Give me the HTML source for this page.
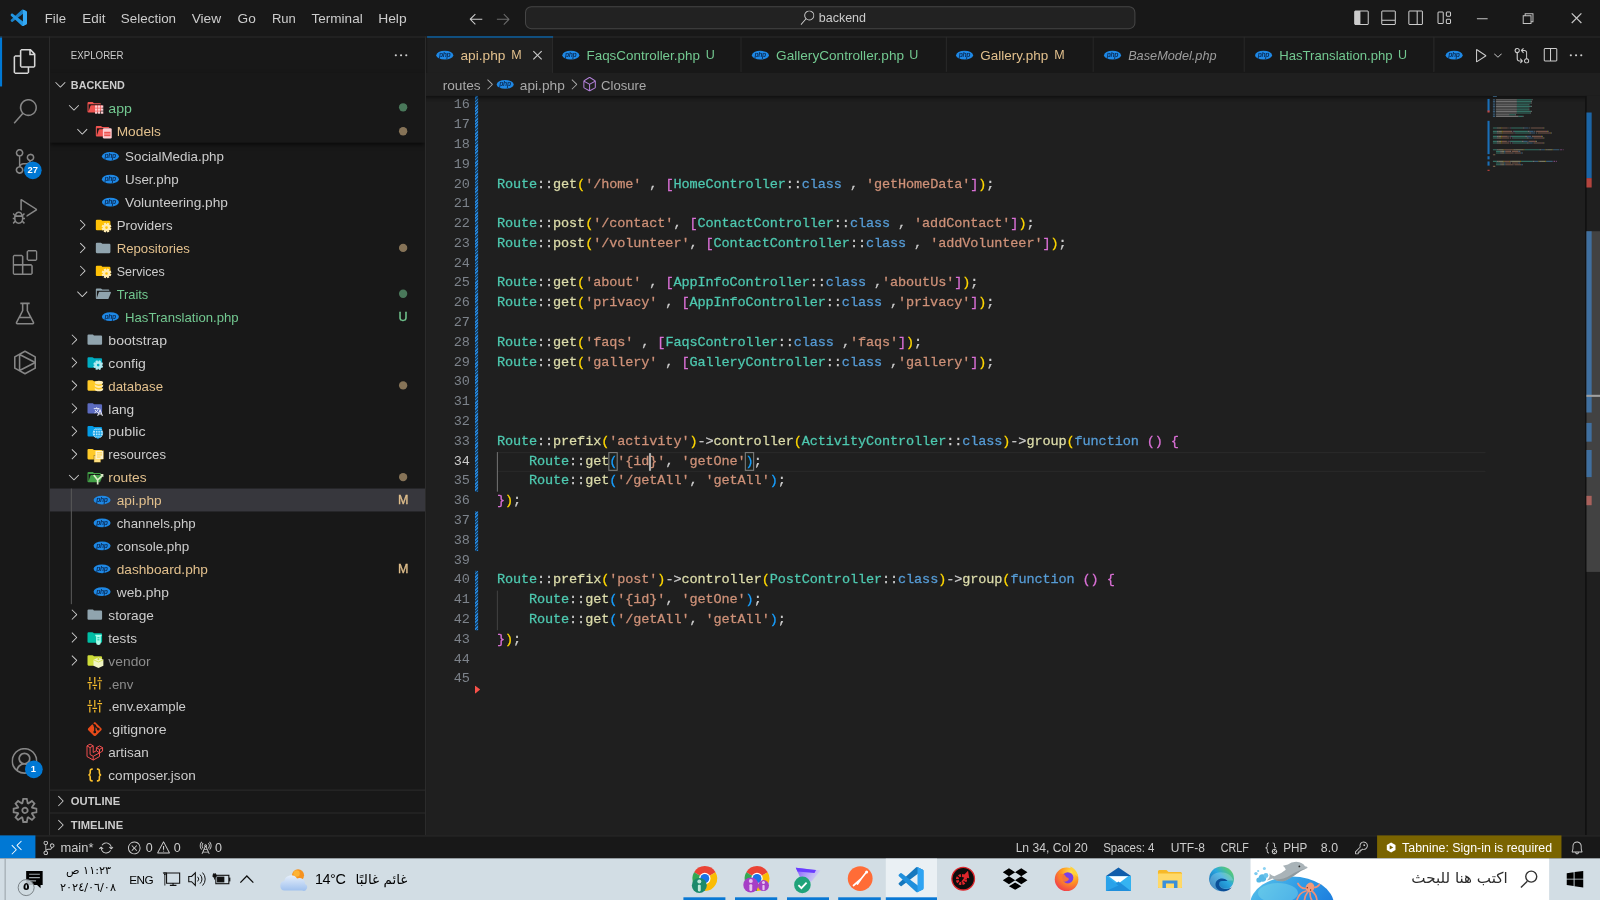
<!DOCTYPE html>
<html lang="en"><head><meta charset="utf-8"><title>api.php - backend - Visual Studio Code</title>
<style>

html,body{margin:0;padding:0;background:#181818;width:1600px;height:900px;overflow:hidden}
#root{position:absolute;left:0;top:0;width:1536px;height:864px;transform:scale(1.0416667);transform-origin:0 0;
 font-family:"Liberation Sans",sans-serif;font-size:13px;color:#cccccc;letter-spacing:-0.15px;background:#181818;overflow:hidden;will-change:transform}
#root *{box-sizing:border-box}
.abs{position:absolute}
svg.ci{display:block;position:absolute}
.t{position:absolute;white-space:pre;line-height:1}
/* title */
#title{position:absolute;left:0;top:0;width:1536px;height:35px;background:#181818}
#title .m{position:absolute;top:10px;white-space:pre;color:#cccccc;line-height:15px}
#cc{position:absolute;left:504px;top:6px;width:586px;height:22px;border:1px solid #454545;border-radius:6px;background:#222222}
/* activity */
#act{position:absolute;left:0;top:35px;width:48px;height:767px;background:#181818;border-right:1px solid #2b2b2b}
/* side */
#side{position:absolute;left:48px;top:35px;width:361px;height:767px;background:#181818;border-right:1px solid #2b2b2b;overflow:hidden}
.row{position:absolute;left:0;width:360px;height:22px}
.row .lbl{position:absolute;top:4px;line-height:15px;white-space:pre}
.row .dec{position:absolute;top:4px;line-height:15px;left:331px;width:16px;text-align:center;font-size:12px;letter-spacing:0;-webkit-text-stroke:0.3px}
.row .dot{position:absolute;top:7px;left:335px;width:8px;height:8px;border-radius:50%}
.mod{color:#e2c08d}.unt{color:#73c991}.ign{color:#8c8c8c}
/* editor */
#ed{position:absolute;left:409px;top:35px;width:1127px;height:767px;background:#1f1f1f;overflow:hidden}
#tabs{position:absolute;left:0;top:0;width:1127px;height:35px;background:#181818}
.tab{position:absolute;top:0;height:35px;border-right:1px solid #2b2b2b;background:#181818}
.ign2{color:#9d9d9d}.tab .lbl{position:absolute;top:10px;line-height:15px;white-space:pre}
#bc{position:absolute;left:0;top:35px;width:1127px;height:22px;background:#1f1f1f}
#code{position:absolute;left:0;top:57px;width:1127px;height:710px;overflow:hidden;background:#1f1f1f}
.ln{position:absolute;left:0;width:42px;text-align:right;font-family:"Liberation Mono",monospace;font-size:13px;letter-spacing:-0.1px;color:#7d838b;line-height:19px;height:19px}
.cl{position:absolute;left:68px;font-family:"Liberation Mono",monospace;font-size:13px;letter-spacing:-0.1px;color:#cccccc;line-height:19px;height:19px;white-space:pre;-webkit-text-stroke:0.25px}
.k{color:#569cd6}.c{color:#4ec9b0}.f{color:#dcdcaa}.s{color:#ce9178}.b1{color:#ffd700}.b2{color:#da70d6}.b3{color:#179fff}
/* status */
#status{position:absolute;left:0;top:802px;width:1536px;height:22px;background:#181818;border-top:1px solid #2b2b2b;font-size:12px;letter-spacing:-0.05px}
#status .t{top:4px;line-height:14px;color:#cccccc}
/* taskbar */
#task{position:absolute;left:0;top:824px;width:1536px;height:40px;background:#d2dde4;color:#000;overflow:hidden}
.ar{font-family:"DejaVu Sans","Liberation Sans",sans-serif;direction:rtl;letter-spacing:0}

</style></head>
<body>
<div id="root">
<div id="title"><svg class="abs" style="left:9.5px;top:9px" width="16" height="16" viewBox="0 0 100 100"><path fill="#1b7fc4" d="M96.5 10.8 75.9 0.9a6.2 6.2 0 0 0-7.1 1.2L1.3 63.6a4.2 4.2 0 0 0 0 6.2l5.5 5a4.2 4.2 0 0 0 5.3 0.2L93.3 13.4c2.7-2.1 6.7-0.100 6.7 3.300v-0.2a6.300 6.300 0 0 0-3.500-5.700z"/><path fill="#2196e3" d="M96.5 89.2 75.900 99.100a6.200 6.200 0 0 1-7.100-1.200L1.300 36.400a4.200 4.200 0 0 1 0-6.200l5.500-5a4.200 4.200 0 0 1 5.300-0.200L93.300 86.600c2.700 2.100 6.700 0.100 6.700-3.300v0.200a6.300 6.300 0 0 1-3.500 5.700z"/><path fill="#35a9f5" d="M75.900 99.100a6.200 6.200 0 0 1-7.100-1.200c2.300 2.300 6.200 0.700 6.200-2.600V4.700c0-3.300-3.900-4.900-6.200-2.600a6.200 6.200 0 0 1 7.100-1.200l20.600 9.900A6.300 6.300 0 0 1 100 16.500v67a6.300 6.300 0 0 1-3.500 5.700z"/></svg><span class="m" style="left:43.3px;display:inline-block;transform:scaleX(0.9736);transform-origin:0 50%;letter-spacing:0;">File</span><span class="m" style="left:78.5px;display:inline-block;transform:scaleX(0.9962);transform-origin:0 50%;letter-spacing:0;">Edit</span><span class="m" style="left:116.4px;display:inline-block;transform:scaleX(0.9917);transform-origin:0 50%;letter-spacing:0;">Selection</span><span class="m" style="left:184.3px;display:inline-block;transform:scaleX(1.0131);transform-origin:0 50%;letter-spacing:0;">View</span><span class="m" style="left:227.8px;display:inline-block;transform:scaleX(1.0102);transform-origin:0 50%;letter-spacing:0;">Go</span><span class="m" style="left:260.6px;display:inline-block;transform:scaleX(0.9657);transform-origin:0 50%;letter-spacing:0;">Run</span><span class="m" style="left:299px;display:inline-block;transform:scaleX(1.0015);transform-origin:0 50%;letter-spacing:0;">Terminal</span><span class="m" style="left:363.1px;display:inline-block;transform:scaleX(1.0228);transform-origin:0 50%;letter-spacing:0;">Help</span><svg class="ci " width="16" height="16" viewBox="0 0 16 16" style="left:449px;top:9.5px"><path fill="#cccccc" d="M7 3.1 2 8.1V8.8L7 13.8L7.7 13.1L3.6 9H14V7.9H3.6L7.7 3.8Z"/></svg><svg class="ci " width="16" height="16" viewBox="0 0 16 16" style="left:475.3px;top:9.5px"><path fill="#6b6b6b" d="M9 13.9 14 8.9V8.2L9 3.2L8.3 3.9L12.4 8.1H2V9H12.4L8.3 13.2Z"/></svg><div id="cc"><svg class="ci " width="14" height="14" viewBox="0 0 16 16" style="left:262.5px;top:3px"><path fill="#cccccc" d="M10.2 0Q8.5 0 7.2 0.9Q5.8 1.8 5.1 3.3Q4.5 4.7 4.7 6.3Q5 7.9 6 9.1L0.7 15.3L1.4 15.9L6.8 9.8Q8.2 10.9 10 11Q11.8 11 13.3 10Q14.8 9 15.4 7.3Q15.9 5.6 15.4 3.9Q14.9 2.1 13.4 1.1Q11.9 0 10.2 0ZM10.2 10Q9 10 7.9 9.4Q6.9 8.8 6.3 7.8Q5.7 6.7 5.7 5.5Q5.7 4.3 6.3 3.2Q6.9 2.2 7.9 1.6Q9 1 10.2 1Q11.4 1 12.4 1.6Q13.4 2.2 14.1 3.2Q14.7 4.3 14.7 5.5Q14.7 6.7 14.1 7.8Q13.4 8.8 12.4 9.4Q11.4 10 10.2 10Z"/></svg><span class="t" style="left:281px;top:3px;font-size:12px;line-height:14px;color:#cccccc;letter-spacing:0">backend</span></div><svg class="ci " width="16" height="16" viewBox="0 0 16 16" style="left:1299px;top:9.3px"><path fill="#cccccc" d="M2 1 1 2V14L2 15H14L15 14V2L14 1ZM14 14H7V2H14Z"/></svg><svg class="ci " width="16" height="16" viewBox="0 0 16 16" style="left:1325px;top:9.3px"><path fill="#cccccc" d="M2 1 1 2V14L2 15H14L15 14V2L14 1ZM2 10V2H14V10ZM2 11H14V14H2Z"/></svg><svg class="ci " width="16" height="16" viewBox="0 0 16 16" style="left:1351px;top:9.3px"><path fill="#cccccc" d="M2 1 1 2V14L2 15H14L15 14V2L14 1ZM2 14V2H9V14ZM10 14V2H14V14Z"/></svg><svg class="ci " width="16" height="16" viewBox="0 0 16 16" style="left:1377.6px;top:9.3px"><path fill="#cccccc" d="M3 2 2 3V13L3 14H7L8 13V3L7 2ZM3 13V3H7V13ZM10 3 11 2H14L15 3V6L14 7H11L10 6ZM11 3V6H14V3ZM10 10 11 9H14L15 10V13L14 14H11L10 13ZM11 10V13H14V10Z"/></svg><svg class="ci " width="15" height="15" viewBox="0 0 16 16" style="left:1414.5px;top:9.8px"><path fill="#c4c4c4" d="M14 8V9H3V8Z"/></svg><svg class="ci " width="15" height="15" viewBox="0 0 16 16" style="left:1459.0px;top:9.8px"><path fill="#c4c4c4" d="M3 5V14H12V5ZM11 13H4V6H11ZM5 5H6V4H13V11H12V12H14V3H5Z"/></svg><svg class="ci " width="15" height="15" viewBox="0 0 16 16" style="left:1505.8px;top:9.8px"><path fill="#c4c4c4" d="M7.1 8 2.6 12.5 3.5 13.4 8 8.9 12.5 13.4 13.4 12.5 8.9 8 13.4 3.5 12.5 2.6 8 7.1 3.5 2.6 2.6 3.5Z"/></svg></div>
<div id="act"><div class="abs" style="left:0;top:0;width:2px;height:48px;background:#0078d4"></div><svg class="ci " width="24" height="24" viewBox="0 0 16 16" style="left:12px;top:12.2px"><path fill="#d7d7d7" d="M11.7 0H5.7L4.7 1V4H1.7L0.7 5V15L1.7 16H9.7L10.7 15V12H13.8L14.7 11V3ZM11.7 1.4 13.3 3H11.7ZM9.7 15H1.7V5H4.7V11L5.7 12H9.7ZM13.7 11H5.7V1H10.7V4H13.7Z"/></svg><svg class="ci " width="24" height="24" viewBox="0 0 16 16" style="left:12px;top:60.2px"><path fill="#868686" d="M10.2 0Q8.5 0 7.2 0.9Q5.8 1.8 5.1 3.3Q4.5 4.7 4.7 6.3Q5 7.9 6 9.1L0.7 15.3L1.4 15.9L6.8 9.8Q8.2 10.9 10 11Q11.8 11 13.3 10Q14.8 9 15.4 7.3Q15.9 5.6 15.4 3.9Q14.9 2.1 13.4 1.1Q11.9 0 10.2 0ZM10.2 10Q9 10 7.9 9.4Q6.9 8.8 6.3 7.8Q5.7 6.7 5.7 5.5Q5.7 4.3 6.3 3.2Q6.9 2.2 7.9 1.6Q9 1 10.2 1Q11.4 1 12.4 1.6Q13.4 2.2 14.1 3.2Q14.7 4.3 14.7 5.5Q14.7 6.7 14.1 7.8Q13.4 8.8 12.4 9.4Q11.4 10 10.2 10Z"/></svg><svg class="ci " width="24" height="24" viewBox="0 0 16 16" style="left:12px;top:108.2px"><path fill="#868686" d="M14 5.5Q14 4.8 13.7 4.2Q13.3 3.6 12.6 3.3Q12 2.9 11.3 3Q10.6 3 10 3.5Q9.4 3.9 9.2 4.6Q9 5.2 9.1 5.9Q9.2 6.6 9.7 7.1Q10.1 7.6 10.8 7.8Q10.6 8.4 10.1 8.7Q9.6 9 9 9H7Q5.9 9 5 9.8V4.9Q6 4.7 6.5 4Q7.1 3.2 7 2.2Q6.9 1.3 6.2 0.6Q5.5 0 4.5 0Q3.6 0 2.9 0.6Q2.1 1.3 2.1 2.2Q2 3.2 2.5 4Q3.1 4.7 4.1 4.9V11Q3.1 11.2 2.5 11.9Q1.9 12.7 2 13.7Q2.1 14.6 2.7 15.3Q3.4 15.9 4.4 16Q5.3 16.1 6.1 15.5Q6.8 14.9 7 13.9Q7.1 13 6.7 12.2Q6.2 11.4 5.2 11.1Q5.5 10.6 6 10.3Q6.5 10 7 10H9Q10 10 10.7 9.4Q11.5 8.9 11.8 7.9Q12.7 7.8 13.4 7.1Q14 6.4 14 5.5ZM3 2.5Q3 1.9 3.5 1.4Q3.9 1 4.5 1Q5.2 1 5.6 1.4Q6 1.9 6 2.5Q6 3.1 5.6 3.5Q5.2 4 4.5 4Q3.9 4 3.5 3.5Q3 3.1 3 2.5ZM6 13.4Q6 14.1 5.6 14.5Q5.2 14.9 4.5 14.9Q3.9 14.9 3.5 14.5Q3 14.1 3 13.5Q3 12.9 3.5 12.4Q3.9 11.9 4.5 11.9Q5.2 11.9 5.6 12.4Q6 12.9 6 13.4ZM11.5 7Q10.9 7 10.5 6.5Q10 6.1 10 5.5Q10 4.9 10.5 4.4Q10.9 4 11.5 4Q12.1 4 12.6 4.4Q13 4.9 13 5.5Q13 6.1 12.6 6.5Q12.1 7 11.5 7Z"/></svg><svg class="ci " width="24" height="24" viewBox="0 0 16 16" style="left:12px;top:156.2px"><path fill="#868686" d="M7.3 9 6.4 9.9Q6.2 9.1 5.5 8.5Q4.9 8 4 8Q3.1 8 2.5 8.5Q1.8 9.1 1.6 9.9L0.7 9L0 9.7L1.2 10.8L1 11V12H0V13H1V13.1Q1.1 13.5 1.3 14L0 15.3L0.7 16L1.8 14.9Q2.2 15.4 2.8 15.7Q3.4 16 4 16Q4.6 16 5.2 15.7Q5.8 15.4 6.2 14.9L7.3 16L8 15.3L6.7 14Q6.9 13.5 7 13V13H8V12H7V11L6.9 10.8L8 9.7ZM4 9Q4.6 9 5.1 9.4Q5.5 9.9 5.5 10.5H2.5Q2.5 9.9 2.9 9.4Q3.4 9 4 9ZM6 13Q5.9 13.8 5.4 14.4Q4.8 14.9 4 15Q3.2 14.9 2.6 14.4Q2.1 13.8 2 13V11.5H6ZM15.8 6.4V7.3L9 11.6V10.4L14.7 6.8L6 1.3V7.6Q5.5 7.3 5 7.1V0.4L5.8 0Z"/></svg><svg class="ci " width="24" height="24" viewBox="0 0 16 16" style="left:12px;top:205.2px"><path fill="#868686" d="M9 1 10 0H15L16 1V6L15 7H10L9 6ZM10 1V6H15V1ZM0 10V4L1 3H6L7 4V9H12L13 10V15L12 16H1L0 15ZM6 9V4H1V9ZM6 10H1V15H6ZM7 15H12V10H7Z"/></svg><svg class="ci " width="24" height="24" viewBox="0 0 16 16" style="left:12px;top:253.7px"><path fill="#868686" d="M13.9 13.5 10 6V2H11V1H5V2H6V6L2.1 13.5Q1.9 14.1 2.2 14.5Q2.5 15 3 15H13Q13.5 15 13.8 14.5Q14.1 14.1 13.9 13.5ZM6.9 6.4 7 6.2V2H9V6.2L10.9 10H5.1ZM3 14 4.5 11H11.5L13 14Z"/></svg><svg class="abs" style="left:12px;top:300.5px" width="24" height="24" viewBox="0 0 24 24" fill="none" stroke="#868686" stroke-width="1.5" stroke-linejoin="round"><path d="M12 1.200L21.800 6.600V17.400L12 22.800 2.200 17.400V6.600Z"/><path d="M6.800 4.300V19.700M6.800 4.300L21.800 12 6.800 19.700" /></svg><div class="abs" style="left:23px;top:120px;width:17px;height:17px;border-radius:9px;background:#0078d4;color:#fff;font-size:9px;font-weight:700;line-height:17px;text-align:center;letter-spacing:0">27</div><svg class="ci " width="25" height="25" viewBox="0 0 16 16" style="left:11.3px;top:682.9px"><path fill="#868686" d="M16 8Q16 5.8 14.9 4Q13.9 2.1 12 1.1Q10.2 0 8 0Q5.8 0 4 1.1Q2.1 2.1 1.1 4Q0 5.8 0 8Q0 9.8 0.7 11.4Q1.5 13 2.8 14.1L3.5 14.6Q5.5 16 8 16Q10.5 16 12.5 14.6L13.2 14.1Q14.5 13 15.3 11.4Q16 9.8 16 8ZM8 15Q5.8 15 4 13.7L4.1 13.3Q4.2 12.8 4.5 12.3Q4.7 11.9 5.1 11.5Q5.5 11.1 5.9 10.9Q6.3 10.6 6.9 10.5Q7.5 10.3 8 10.3Q8.8 10.3 9.6 10.6Q10.3 10.9 10.9 11.5Q11.5 12.1 11.8 12.8Q11.9 13.2 12.1 13.7Q10.2 15 8 15ZM5.5 7.6Q5.3 7.1 5.3 6.6Q5.3 6 5.5 5.5Q5.8 5.1 6.1 4.7Q6.5 4.4 6.9 4.1Q7.4 3.9 8 3.9Q8.6 3.9 9 4.1Q9.5 4.3 9.9 4.7Q10.2 5.1 10.5 5.5Q10.7 6 10.7 6.6Q10.7 7.1 10.5 7.6Q10.2 8.1 9.9 8.4Q9.5 8.8 9 9Q8 9.4 6.9 9Q6.5 8.8 6.1 8.4Q5.8 8.1 5.5 7.6ZM13 12.9Q13 12.9 13 12.9V12.8Q12.7 12.1 12.3 11.4Q11.8 10.8 11.2 10.3Q10.7 9.9 10.1 9.7Q10.4 9.5 10.6 9.3Q11 8.9 11.3 8.5Q11.8 7.6 11.7 6.6Q11.8 5.8 11.5 5.1Q11.2 4.4 10.7 3.9Q10.1 3.4 9.4 3.1Q8.7 2.8 8 2.8Q7.2 2.8 6.5 3.1Q5.8 3.4 5.3 3.9Q4.8 4.4 4.5 5.1Q4.2 5.8 4.2 6.6Q4.2 7.1 4.4 7.6Q4.5 8.1 4.7 8.5Q5 8.9 5.4 9.3Q5.6 9.5 5.9 9.7Q5.3 9.9 4.9 10.3Q4.2 10.8 3.8 11.4Q3.3 12.1 3 12.9V12.9Q2.1 11.9 1.5 10.7Q1 9.4 1 8Q1 6.1 1.9 4.5Q2.9 2.9 4.5 1.9Q6.1 1 8 1Q9.9 1 11.5 1.9Q13.1 2.9 14.1 4.5Q15 6.1 15 8Q15 9.4 14.5 10.7Q14 11.9 13 12.9Z"/></svg><div class="abs" style="left:23.5px;top:694.5px;width:17px;height:17px;border-radius:9px;background:#0078d4;color:#fff;font-size:9px;font-weight:700;line-height:17px;text-align:center;letter-spacing:0">1</div><svg class="ci " width="24" height="24" viewBox="0 0 16 16" style="left:12px;top:730.6px"><path fill="#868686" d="M13.2 5.8 16 6.4V9.6L13.2 10.2L14.8 12.5L12.5 14.8L10.2 13.2L9.6 16H6.4L5.8 13.2L3.5 14.8L1.2 12.5L2.8 10.2L0 9.6V6.4L2.8 5.8L1.2 3.5L3.5 1.2L5.8 2.8L6.4 0H9.6L10.2 2.8L12.5 1.2L14.8 3.5ZM12.2 9.2 14.9 8.7V7.4L12.2 6.8L11.8 5.9L13.3 3.6L12.4 2.7L10.1 4.2L9.2 3.8L8.7 1.2H7.4L6.8 3.8L6 4.2L3.7 2.7L2.7 3.6L4.3 5.9L3.9 6.8L1.2 7.4V8.7L3.9 9.2L4.3 10.1L2.7 12.4L3.7 13.3L6 11.8L6.8 12.2L7.4 14.8H8.7L9.2 12.2L10.1 11.8L12.4 13.3L13.3 12.4L11.8 10.1ZM6.7 6.1Q7.3 5.7 8 5.7Q9 5.7 9.6 6.4Q10.3 7 10.3 8Q10.3 8.8 9.8 9.4Q9.2 10.1 8.4 10.2Q7.6 10.4 6.9 10Q6.2 9.7 5.9 8.9Q5.6 8.1 5.8 7.3Q6 6.6 6.7 6.1ZM7.4 9Q7.7 9.1 8 9.1Q8.5 9.1 8.8 8.8Q9.1 8.5 9.1 8Q9.1 7.6 8.9 7.3Q8.6 7 8.2 6.9Q7.8 6.8 7.5 7Q7.1 7.2 6.9 7.6Q6.8 7.9 6.9 8.3Q7 8.7 7.4 9Z"/></svg></div><div id="side"><span class="t" style="left:20px;top:11.5px;font-size:11px;line-height:13px;color:#cccccc;display:inline-block;transform:scaleX(0.8451);transform-origin:0 50%;letter-spacing:0;">EXPLORER</span><svg class="ci " width="16" height="16" viewBox="0 0 16 16" style="left:329px;top:9.5px"><path fill="#cccccc" d="M4 8Q4 8.4 3.7 8.7Q3.4 9 3 9Q2.6 9 2.3 8.7Q2 8.4 2 8Q2 7.6 2.3 7.3Q2.6 7 3 7Q3.4 7 3.7 7.3Q4 7.6 4 8ZM9 8Q9 8.4 8.7 8.7Q8.4 9 8 9Q7.6 9 7.3 8.7Q7 8.4 7 8Q7 7.6 7.3 7.3Q7.6 7 8 7Q8.4 7 8.7 7.3Q9 7.6 9 8ZM14 8Q14 8.4 13.7 8.7Q13.4 9 13 9Q12.6 9 12.3 8.7Q12 8.4 12 8Q12 7.6 12.3 7.3Q12.6 7 13 7Q13.4 7 13.7 7.3Q14 7.6 14 8Z"/></svg><div class="row" style="top:104.14px;"><svg class="abs" style="left:49.7px;top:3px;overflow:visible" width="16" height="16" viewBox="0 0 32 32"><ellipse cx="16" cy="16" rx="16.300" ry="8.400" fill="#1e88e5"/><text x="15.600" y="19.600" font-family="Liberation Sans,sans-serif" font-size="13" font-style="italic" font-weight="700" text-anchor="middle" fill="#0a2f5c" letter-spacing="-0.7">php</text></svg><span class="lbl " style="left:72px;display:inline-block;transform:scaleX(0.9887);transform-origin:0 50%;letter-spacing:0;">SocialMedia.php</span></div><div class="row" style="top:126.14px;"><svg class="abs" style="left:49.7px;top:3px;overflow:visible" width="16" height="16" viewBox="0 0 32 32"><ellipse cx="16" cy="16" rx="16.300" ry="8.400" fill="#1e88e5"/><text x="15.600" y="19.600" font-family="Liberation Sans,sans-serif" font-size="13" font-style="italic" font-weight="700" text-anchor="middle" fill="#0a2f5c" letter-spacing="-0.7">php</text></svg><span class="lbl " style="left:72px;display:inline-block;transform:scaleX(0.9905);transform-origin:0 50%;letter-spacing:0;">User.php</span></div><div class="row" style="top:148.14px;"><svg class="abs" style="left:49.7px;top:3px;overflow:visible" width="16" height="16" viewBox="0 0 32 32"><ellipse cx="16" cy="16" rx="16.300" ry="8.400" fill="#1e88e5"/><text x="15.600" y="19.600" font-family="Liberation Sans,sans-serif" font-size="13" font-style="italic" font-weight="700" text-anchor="middle" fill="#0a2f5c" letter-spacing="-0.7">php</text></svg><span class="lbl " style="left:72px;display:inline-block;transform:scaleX(1.0132);transform-origin:0 50%;letter-spacing:0;">Volunteering.php</span></div><div class="row" style="top:170.14px;"><svg class="ci " width="16" height="16" viewBox="0 0 16 16" style="left:23px;top:3px"><path fill="#cccccc" d="M10.1 8 5.7 3.7 6.3 3 11 7.7V8.3L6.3 13L5.7 12.4Z"/></svg><svg class="abs" style="left:42.5px;top:3px;overflow:visible" width="16" height="16" viewBox="0 0 32 32"><path fill="#ffc107" d="M4 6h7.300a2 2 0 0 1 1.280.460l1.290 1.080a2 2 0 0 0 1.280.460H28a2 2 0 0 1 2 2v14a2 2 0 0 1-2 2H4a2 2 0 0 1-2-2V8a2 2 0 0 1 2-2z"/><path d="M27.16 22.93L31.15 24.58M24.43 25.66L26.08 29.65M20.57 25.66L18.92 29.65M17.84 22.93L13.85 24.58M17.84 19.07L13.85 17.42M20.57 16.34L18.92 12.35M24.43 16.34L26.08 12.35M27.16 19.07L31.15 17.42" stroke="#ffecb3" stroke-width="4.32" fill="none"/><circle cx="22.5" cy="21" r="4.75" fill="none" stroke="#ffecb3" stroke-width="4.46"/></svg><span class="lbl " style="left:64px;display:inline-block;transform:scaleX(0.9788);transform-origin:0 50%;letter-spacing:0;">Providers</span></div><div class="row" style="top:192.15px;"><svg class="ci " width="16" height="16" viewBox="0 0 16 16" style="left:23px;top:3px"><path fill="#cccccc" d="M10.1 8 5.7 3.7 6.3 3 11 7.7V8.3L6.3 13L5.7 12.4Z"/></svg><svg class="abs" style="left:42.5px;top:3px;overflow:visible" width="16" height="16" viewBox="0 0 32 32"><path fill="#90a4ae" d="M4 6h7.300a2 2 0 0 1 1.280.460l1.290 1.080a2 2 0 0 0 1.280.460H28a2 2 0 0 1 2 2v14a2 2 0 0 1-2 2H4a2 2 0 0 1-2-2V8a2 2 0 0 1 2-2z"/></svg><span class="lbl mod" style="left:64px;display:inline-block;transform:scaleX(0.9737);transform-origin:0 50%;letter-spacing:0;">Repositories</span><span class="dot" style="background:#e2c08d;opacity:.55"></span></div><div class="row" style="top:214.15px;"><svg class="ci " width="16" height="16" viewBox="0 0 16 16" style="left:23px;top:3px"><path fill="#cccccc" d="M10.1 8 5.7 3.7 6.3 3 11 7.7V8.3L6.3 13L5.7 12.4Z"/></svg><svg class="abs" style="left:42.5px;top:3px;overflow:visible" width="16" height="16" viewBox="0 0 32 32"><path fill="#ffc107" d="M4 6h7.300a2 2 0 0 1 1.280.460l1.290 1.080a2 2 0 0 0 1.280.460H28a2 2 0 0 1 2 2v14a2 2 0 0 1-2 2H4a2 2 0 0 1-2-2V8a2 2 0 0 1 2-2z"/><path d="M27.16 22.93L31.15 24.58M24.43 25.66L26.08 29.65M20.57 25.66L18.92 29.65M17.84 22.93L13.85 24.58M17.84 19.07L13.85 17.42M20.57 16.34L18.92 12.35M24.43 16.34L26.08 12.35M27.16 19.07L31.15 17.42" stroke="#ffecb3" stroke-width="4.32" fill="none"/><circle cx="22.5" cy="21" r="4.75" fill="none" stroke="#ffecb3" stroke-width="4.46"/></svg><span class="lbl " style="left:64px;display:inline-block;transform:scaleX(0.9242);transform-origin:0 50%;letter-spacing:0;">Services</span></div><div class="row" style="top:236.15px;"><svg class="ci " width="16" height="16" viewBox="0 0 16 16" style="left:23px;top:3px"><path fill="#cccccc" d="M8 10.1 12.3 5.7 13 6.3 8.3 11H7.7L3 6.3L3.6 5.7Z"/></svg><svg class="abs" style="left:42.5px;top:3px;overflow:visible" width="16" height="16" viewBox="0 0 32 32"><path fill="#90a4ae" d="M28.970 12H9.440a2 2 0 0 0-1.900 1.370L4 24V10h24a2 2 0 0 0-2-2H15.120a2 2 0 0 1-1.280-.460l-1.290-1.080A2 2 0 0 0 11.280 6H4a2 2 0 0 0-2 2v16a2 2 0 0 0 2 2h22l4.800-11.210A2 2 0 0 0 28.970 12z"/></svg><span class="lbl unt" style="left:64px;display:inline-block;transform:scaleX(0.9471);transform-origin:0 50%;letter-spacing:0;">Traits</span><span class="dot" style="background:#73c991;opacity:.55"></span></div><div class="row" style="top:258.15px;"><svg class="abs" style="left:49.7px;top:3px;overflow:visible" width="16" height="16" viewBox="0 0 32 32"><ellipse cx="16" cy="16" rx="16.300" ry="8.400" fill="#1e88e5"/><text x="15.600" y="19.600" font-family="Liberation Sans,sans-serif" font-size="13" font-style="italic" font-weight="700" text-anchor="middle" fill="#0a2f5c" letter-spacing="-0.7">php</text></svg><span class="lbl unt" style="left:72px;display:inline-block;transform:scaleX(0.9724);transform-origin:0 50%;letter-spacing:0;">HasTranslation.php</span><span class="dec unt">U</span></div><div class="row" style="top:280.15px;"><svg class="ci " width="16" height="16" viewBox="0 0 16 16" style="left:15px;top:3px"><path fill="#cccccc" d="M10.1 8 5.7 3.7 6.3 3 11 7.7V8.3L6.3 13L5.7 12.4Z"/></svg><svg class="abs" style="left:34.5px;top:3px;overflow:visible" width="16" height="16" viewBox="0 0 32 32"><path fill="#90a4ae" d="M4 6h7.300a2 2 0 0 1 1.280.460l1.290 1.080a2 2 0 0 0 1.280.460H28a2 2 0 0 1 2 2v14a2 2 0 0 1-2 2H4a2 2 0 0 1-2-2V8a2 2 0 0 1 2-2z"/></svg><span class="lbl " style="left:56px;display:inline-block;transform:scaleX(1.0396);transform-origin:0 50%;letter-spacing:0;">bootstrap</span></div><div class="row" style="top:302.15px;"><svg class="ci " width="16" height="16" viewBox="0 0 16 16" style="left:15px;top:3px"><path fill="#cccccc" d="M10.1 8 5.7 3.7 6.3 3 11 7.7V8.3L6.3 13L5.7 12.4Z"/></svg><svg class="abs" style="left:34.5px;top:3px;overflow:visible" width="16" height="16" viewBox="0 0 32 32"><path fill="#00acc1" d="M4 6h7.300a2 2 0 0 1 1.280.460l1.290 1.080a2 2 0 0 0 1.280.460H28a2 2 0 0 1 2 2v14a2 2 0 0 1-2 2H4a2 2 0 0 1-2-2V8a2 2 0 0 1 2-2z"/><path d="M27.16 22.93L31.15 24.58M24.43 25.66L26.08 29.65M20.57 25.66L18.92 29.65M17.84 22.93L13.85 24.58M17.84 19.07L13.85 17.42M20.57 16.34L18.92 12.35M24.43 16.34L26.08 12.35M27.16 19.07L31.15 17.42" stroke="#b2ebf2" stroke-width="4.32" fill="none"/><circle cx="22.5" cy="21" r="4.75" fill="none" stroke="#b2ebf2" stroke-width="4.46"/></svg><span class="lbl " style="left:56px;display:inline-block;transform:scaleX(1.0401);transform-origin:0 50%;letter-spacing:0;">config</span></div><div class="row" style="top:324.15px;"><svg class="ci " width="16" height="16" viewBox="0 0 16 16" style="left:15px;top:3px"><path fill="#cccccc" d="M10.1 8 5.7 3.7 6.3 3 11 7.7V8.3L6.3 13L5.7 12.4Z"/></svg><svg class="abs" style="left:34.5px;top:3px;overflow:visible" width="16" height="16" viewBox="0 0 32 32"><path fill="#ffca28" d="M4 6h7.300a2 2 0 0 1 1.280.460l1.290 1.080a2 2 0 0 0 1.280.460H28a2 2 0 0 1 2 2v14a2 2 0 0 1-2 2H4a2 2 0 0 1-2-2V8a2 2 0 0 1 2-2z"/><ellipse cx="24" cy="10.500" rx="8" ry="3.600" fill="#ffecb3"/><path fill="#ffecb3" d="M16 13.500c0 2 3.600 3.600 8 3.600s8-1.600 8-3.600v3.700c0 2-3.600 3.600-8 3.600s-8-1.600-8-3.600zM16 20c0 2 3.600 3.600 8 3.600s8-1.600 8-3.600v3.700c0 2-3.600 3.600-8 3.600s-8-1.600-8-3.600z"/></svg><span class="lbl mod" style="left:56px;display:inline-block;transform:scaleX(0.9815);transform-origin:0 50%;letter-spacing:0;">database</span><span class="dot" style="background:#e2c08d;opacity:.55"></span></div><div class="row" style="top:346.15px;"><svg class="ci " width="16" height="16" viewBox="0 0 16 16" style="left:15px;top:3px"><path fill="#cccccc" d="M10.1 8 5.7 3.7 6.3 3 11 7.7V8.3L6.3 13L5.7 12.4Z"/></svg><svg class="abs" style="left:34.5px;top:3px;overflow:visible" width="16" height="16" viewBox="0 0 32 32"><path fill="#5c6bc0" d="M4 6h7.300a2 2 0 0 1 1.280.460l1.290 1.080a2 2 0 0 0 1.280.460H28a2 2 0 0 1 2 2v14a2 2 0 0 1-2 2H4a2 2 0 0 1-2-2V8a2 2 0 0 1 2-2z"/><path d="M14 16.500h11M19.500 14v2.500M15.500 24.500c4.200-1.700 6.600-4.600 7.200-8M16.400 19c1.300 2.800 3.600 4.700 6.600 5.700" stroke="#e8eaf6" stroke-width="1.800" fill="none"/><path d="M21.500 30.500l4.600-11.500 4.600 11.500M23.200 27h5.800" stroke="#e8eaf6" stroke-width="2.100" fill="none"/></svg><span class="lbl " style="left:56px;display:inline-block;transform:scaleX(1.0116);transform-origin:0 50%;letter-spacing:0;">lang</span></div><div class="row" style="top:368.15px;"><svg class="ci " width="16" height="16" viewBox="0 0 16 16" style="left:15px;top:3px"><path fill="#cccccc" d="M10.1 8 5.7 3.7 6.3 3 11 7.7V8.3L6.3 13L5.7 12.4Z"/></svg><svg class="abs" style="left:34.5px;top:3px;overflow:visible" width="16" height="16" viewBox="0 0 32 32"><path fill="#039be5" d="M4 6h7.300a2 2 0 0 1 1.280.460l1.290 1.080a2 2 0 0 0 1.280.460H28a2 2 0 0 1 2 2v14a2 2 0 0 1-2 2H4a2 2 0 0 1-2-2V8a2 2 0 0 1 2-2z"/><circle cx="22" cy="19.500" r="10" fill="#b3e5fc"/><path d="M12 19.500h20M22 9.500v20M14 14.500h16M14 24.500h16" stroke="#039be5" stroke-width="1.500" fill="none"/><ellipse cx="22" cy="19.500" rx="4.800" ry="10" fill="none" stroke="#039be5" stroke-width="1.500"/></svg><span class="lbl " style="left:56px;display:inline-block;transform:scaleX(1.0541);transform-origin:0 50%;letter-spacing:0;">public</span></div><div class="row" style="top:390.15px;"><svg class="ci " width="16" height="16" viewBox="0 0 16 16" style="left:15px;top:3px"><path fill="#cccccc" d="M10.1 8 5.7 3.7 6.3 3 11 7.7V8.3L6.3 13L5.7 12.4Z"/></svg><svg class="abs" style="left:34.5px;top:3px;overflow:visible" width="16" height="16" viewBox="0 0 32 32"><path fill="#ffca28" d="M4 6h7.300a2 2 0 0 1 1.280.460l1.290 1.080a2 2 0 0 0 1.280.460H28a2 2 0 0 1 2 2v14a2 2 0 0 1-2 2H4a2 2 0 0 1-2-2V8a2 2 0 0 1 2-2z"/><rect x="14.500" y="18" width="13" height="13.500" fill="#ffe082" stroke="#6b5514" stroke-width=".8"/><rect x="17" y="9.500" width="15.500" height="16" fill="#fff3cd" stroke="#ffca28" stroke-width=".5"/><path d="M20 13.500h10M20 17.500h10M20 21.500h7" stroke="#ffca28" stroke-width="1.700"/></svg><span class="lbl " style="left:56px;display:inline-block;transform:scaleX(0.9688);transform-origin:0 50%;letter-spacing:0;">resources</span></div><div class="row" style="top:412.15px;"><svg class="ci " width="16" height="16" viewBox="0 0 16 16" style="left:15px;top:3px"><path fill="#cccccc" d="M8 10.1 12.3 5.7 13 6.3 8.3 11H7.7L3 6.3L3.6 5.7Z"/></svg><svg class="abs" style="left:34.5px;top:3px;overflow:visible" width="16" height="16" viewBox="0 0 32 32"><path fill="#43a047" d="M28.970 12H9.440a2 2 0 0 0-1.900 1.370L4 24V10h24a2 2 0 0 0-2-2H15.120a2 2 0 0 1-1.280-.460l-1.290-1.080A2 2 0 0 0 11.280 6H4a2 2 0 0 0-2 2v16a2 2 0 0 0 2 2h22l4.800-11.210A2 2 0 0 0 28.970 12z"/><path d="M14 12l7.500 9.500v8.500M30.500 13l-9 8.500" stroke="#dcedc8" stroke-width="3.200" fill="none" stroke-linejoin="round"/><path d="M26 10h6.500v6.500z" fill="#dcedc8"/></svg><span class="lbl mod" style="left:56px;display:inline-block;transform:scaleX(1.0174);transform-origin:0 50%;letter-spacing:0;">routes</span><span class="dot" style="background:#e2c08d;opacity:.55"></span></div><div class="row" style="top:434.15px;background:#37373d;"><svg class="abs" style="left:41.7px;top:3px;overflow:visible" width="16" height="16" viewBox="0 0 32 32"><ellipse cx="16" cy="16" rx="16.300" ry="8.400" fill="#1e88e5"/><text x="15.600" y="19.600" font-family="Liberation Sans,sans-serif" font-size="13" font-style="italic" font-weight="700" text-anchor="middle" fill="#0a2f5c" letter-spacing="-0.7">php</text></svg><span class="lbl mod" style="left:64px;display:inline-block;transform:scaleX(1.0127);transform-origin:0 50%;letter-spacing:0;">api.php</span><span class="dec mod">M</span></div><div class="row" style="top:456.15px;"><svg class="abs" style="left:41.7px;top:3px;overflow:visible" width="16" height="16" viewBox="0 0 32 32"><ellipse cx="16" cy="16" rx="16.300" ry="8.400" fill="#1e88e5"/><text x="15.600" y="19.600" font-family="Liberation Sans,sans-serif" font-size="13" font-style="italic" font-weight="700" text-anchor="middle" fill="#0a2f5c" letter-spacing="-0.7">php</text></svg><span class="lbl " style="left:64px;display:inline-block;transform:scaleX(0.9806);transform-origin:0 50%;letter-spacing:0;">channels.php</span></div><div class="row" style="top:478.15px;"><svg class="abs" style="left:41.7px;top:3px;overflow:visible" width="16" height="16" viewBox="0 0 32 32"><ellipse cx="16" cy="16" rx="16.300" ry="8.400" fill="#1e88e5"/><text x="15.600" y="19.600" font-family="Liberation Sans,sans-serif" font-size="13" font-style="italic" font-weight="700" text-anchor="middle" fill="#0a2f5c" letter-spacing="-0.7">php</text></svg><span class="lbl " style="left:64px;display:inline-block;transform:scaleX(0.9953);transform-origin:0 50%;letter-spacing:0;">console.php</span></div><div class="row" style="top:500.15px;"><svg class="abs" style="left:41.7px;top:3px;overflow:visible" width="16" height="16" viewBox="0 0 32 32"><ellipse cx="16" cy="16" rx="16.300" ry="8.400" fill="#1e88e5"/><text x="15.600" y="19.600" font-family="Liberation Sans,sans-serif" font-size="13" font-style="italic" font-weight="700" text-anchor="middle" fill="#0a2f5c" letter-spacing="-0.7">php</text></svg><span class="lbl mod" style="left:64px;display:inline-block;transform:scaleX(1.0104);transform-origin:0 50%;letter-spacing:0;">dashboard.php</span><span class="dec mod">M</span></div><div class="row" style="top:522.15px;"><svg class="abs" style="left:41.7px;top:3px;overflow:visible" width="16" height="16" viewBox="0 0 32 32"><ellipse cx="16" cy="16" rx="16.300" ry="8.400" fill="#1e88e5"/><text x="15.600" y="19.600" font-family="Liberation Sans,sans-serif" font-size="13" font-style="italic" font-weight="700" text-anchor="middle" fill="#0a2f5c" letter-spacing="-0.7">php</text></svg><span class="lbl " style="left:64px;display:inline-block;transform:scaleX(1.0194);transform-origin:0 50%;letter-spacing:0;">web.php</span></div><div class="row" style="top:544.15px;"><svg class="ci " width="16" height="16" viewBox="0 0 16 16" style="left:15px;top:3px"><path fill="#cccccc" d="M10.1 8 5.7 3.7 6.3 3 11 7.7V8.3L6.3 13L5.7 12.4Z"/></svg><svg class="abs" style="left:34.5px;top:3px;overflow:visible" width="16" height="16" viewBox="0 0 32 32"><path fill="#90a4ae" d="M4 6h7.300a2 2 0 0 1 1.280.460l1.290 1.080a2 2 0 0 0 1.280.460H28a2 2 0 0 1 2 2v14a2 2 0 0 1-2 2H4a2 2 0 0 1-2-2V8a2 2 0 0 1 2-2z"/></svg><span class="lbl " style="left:56px;display:inline-block;transform:scaleX(1.0092);transform-origin:0 50%;letter-spacing:0;">storage</span></div><div class="row" style="top:566.15px;"><svg class="ci " width="16" height="16" viewBox="0 0 16 16" style="left:15px;top:3px"><path fill="#cccccc" d="M10.1 8 5.7 3.7 6.3 3 11 7.7V8.3L6.3 13L5.7 12.4Z"/></svg><svg class="abs" style="left:34.5px;top:3px;overflow:visible" width="16" height="16" viewBox="0 0 32 32"><path fill="#00bfa5" d="M4 6h7.300a2 2 0 0 1 1.280.460l1.290 1.080a2 2 0 0 0 1.280.460H28a2 2 0 0 1 2 2v14a2 2 0 0 1-2 2H4a2 2 0 0 1-2-2V8a2 2 0 0 1 2-2z"/><path d="M17 10.500h12v3h-1.500v12.500a4.500 4.500 0 0 1-9 0V13.500H17z" fill="#a7ffeb"/><path d="M21 16.500h4M21 20.500h4" stroke="#00bfa5" stroke-width="1.800"/></svg><span class="lbl " style="left:56px;display:inline-block;transform:scaleX(0.9995);transform-origin:0 50%;letter-spacing:0;">tests</span></div><div class="row" style="top:588.15px;"><svg class="ci " width="16" height="16" viewBox="0 0 16 16" style="left:15px;top:3px"><path fill="#cccccc" d="M10.1 8 5.7 3.7 6.3 3 11 7.7V8.3L6.3 13L5.7 12.4Z"/></svg><svg class="abs" style="left:34.5px;top:3px;overflow:visible" width="16" height="16" viewBox="0 0 32 32"><path fill="#cddc39" d="M4 6h7.300a2 2 0 0 1 1.280.460l1.290 1.080a2 2 0 0 0 1.280.460H28a2 2 0 0 1 2 2v14a2 2 0 0 1-2 2H4a2 2 0 0 1-2-2V8a2 2 0 0 1 2-2z"/><path d="M23 10.500l9.500 4.300v11.400l-9.500 4.300-9.500-4.300v-11.400z" fill="#f0f4c3"/><path d="M13.500 14.800l9.500 4.300 9.500-4.300" stroke="#cddc39" stroke-width="1.400" fill="none"/><circle cx="23" cy="13.500" r="2" fill="#cddc39"/></svg><span class="lbl ign" style="left:56px;display:inline-block;transform:scaleX(1.0216);transform-origin:0 50%;letter-spacing:0;">vendor</span></div><div class="row" style="top:610.15px;"><svg class="abs" style="left:34.5px;top:3px;overflow:visible" width="16" height="16" viewBox="0 0 32 32"><path d="M6.500 4v7M6.500 17v11M16 4v13M16 23v5M25.500 4v4M25.500 14v14M2 14.500h9M11.500 20h9M21 11h9" stroke="#fbc02d" stroke-width="2.300" fill="none"/></svg><span class="lbl ign" style="left:56px;display:inline-block;transform:scaleX(0.9765);transform-origin:0 50%;letter-spacing:0;">.env</span></div><div class="row" style="top:632.15px;"><svg class="abs" style="left:34.5px;top:3px;overflow:visible" width="16" height="16" viewBox="0 0 32 32"><path d="M6.500 4v7M6.500 17v11M16 4v13M16 23v5M25.500 4v4M25.500 14v14M2 14.500h9M11.500 20h9M21 11h9" stroke="#fbc02d" stroke-width="2.300" fill="none"/></svg><span class="lbl " style="left:56px;display:inline-block;transform:scaleX(0.9756);transform-origin:0 50%;letter-spacing:0;">.env.example</span></div><div class="row" style="top:654.15px;"><svg class="abs" style="left:34.5px;top:3px;overflow:visible" width="16" height="16" viewBox="0 0 32 32"><g transform="scale(1.3333)"><path d="M2.600 10.590L8.380 4.800l1.690 1.700c-.24.850.15 1.780.93 2.230v5.540c-.6.340-1 .990-1 1.730a2 2 0 0 0 2 2 2 2 0 0 0 2-2c0-.74-.4-1.390-1-1.730V9.410l2.070 2.090c-.07.150-.07.320-.07.500a2 2 0 0 0 2 2 2 2 0 0 0 2-2 2 2 0 0 0-2-2c-.18 0-.35 0-.5.070L13.930 7.500a1.980 1.980 0 0 0-1.150-2.340c-.43-.16-.88-.2-1.280-.09L9.800 3.380l.79-.78c.78-.79 2.040-.79 2.820 0l7.990 7.990c.79.780.79 2.040 0 2.820l-7.990 7.990c-.78.790-2.040.790-2.820 0L2.600 13.410c-.79-.78-.79-2.040 0-2.820z" fill="#e64a19"/></g></svg><span class="lbl " style="left:56px;display:inline-block;transform:scaleX(1.0446);transform-origin:0 50%;letter-spacing:0;">.gitignore</span></div><div class="row" style="top:676.15px;"><svg class="abs" style="left:34.5px;top:3px;overflow:visible" width="16" height="16" viewBox="0 0 32 32"><g transform="scale(1.3333)"><path d="M0.8 3L5.2 0.500 9.700 3V12.600L14.300 10V5.600L18.800 3.100 23.200 5.600V10.600L18.800 13.200V18.400L9.700 23.500 0.800 18.400ZM0.800 3L5.200 5.600 9.700 3M5.200 5.600V15.500L9.700 18.100 18.800 13.200M9.700 18.100V23.500M14.300 5.600L18.800 8.200 23.200 5.600M18.800 8.200V13.200M14.300 10L18.800 13.200" stroke="#ff5252" stroke-width="1.350" fill="none" stroke-linejoin="round"/></g></svg><span class="lbl " style="left:56px;display:inline-block;transform:scaleX(0.9961);transform-origin:0 50%;letter-spacing:0;">artisan</span></div><div class="row" style="top:698.15px;"><svg class="abs" style="left:34.5px;top:3px;overflow:visible" width="16" height="16" viewBox="0 0 32 32"><g transform="scale(1.3333)"><path d="M9 3.500H8a2.600 2.600 0 0 0-2.600 2.600v3.200c0 1.500-.9 2.400-2.400 2.700 1.500.3 2.400 1.200 2.400 2.700v3.200A2.600 2.600 0 0 0 8 20.500h1M15 3.500h1a2.600 2.600 0 0 1 2.600 2.600v3.200c0 1.500.9 2.400 2.400 2.700-1.500.3-2.400 1.200-2.400 2.700v3.200a2.600 2.600 0 0 1-2.600 2.600h-1" stroke="#fbc02d" stroke-width="2.300" fill="none"/></g></svg><span class="lbl " style="left:56px;display:inline-block;transform:scaleX(1.0009);transform-origin:0 50%;letter-spacing:0;">composer.json</span></div><div class="abs" style="left:19.6px;top:434.44px;width:1px;height:110.40px;background:#585858"></div><div class="abs" style="left:0;top:35px;width:360px;height:66.5px;background:#181818;box-shadow:0 2px 4px rgba(0,0,0,.6)"></div><svg class="ci " width="16" height="16" viewBox="0 0 16 16" style="left:1.500px;top:37.5px"><path fill="#cccccc" d="M8 10.1 12.3 5.7 13 6.3 8.3 11H7.7L3 6.3L3.6 5.7Z"/></svg><span class="t" style="left:20px;top:39.5px;font-size:11px;font-weight:700;line-height:13px;color:#cccccc;display:inline-block;transform:scaleX(0.9425);transform-origin:0 50%;letter-spacing:0;">BACKEND</span><div class="row" style="top:57.30px;"><svg class="ci " width="16" height="16" viewBox="0 0 16 16" style="left:15px;top:3px"><path fill="#cccccc" d="M8 10.1 12.3 5.7 13 6.3 8.3 11H7.7L3 6.3L3.6 5.7Z"/></svg><svg class="abs" style="left:34.5px;top:3px;overflow:visible" width="16" height="16" viewBox="0 0 32 32"><path fill="#ef5350" d="M28.970 12H9.440a2 2 0 0 0-1.900 1.370L4 24V10h24a2 2 0 0 0-2-2H15.120a2 2 0 0 1-1.280-.460l-1.290-1.080A2 2 0 0 0 11.280 6H4a2 2 0 0 0-2 2v16a2 2 0 0 0 2 2h22l4.800-11.210A2 2 0 0 0 28.970 12z"/><rect x="16.5" y="12.5" width="4.400" height="4.400" fill="#ffcdd2"/><rect x="16.5" y="18.2" width="4.400" height="4.400" fill="#ffcdd2"/><rect x="16.5" y="23.9" width="4.400" height="4.400" fill="#ffcdd2"/><rect x="22.2" y="12.5" width="4.400" height="4.400" fill="#ffcdd2"/><rect x="22.2" y="18.2" width="4.400" height="4.400" fill="#ffcdd2"/><rect x="22.2" y="23.9" width="4.400" height="4.400" fill="#ffcdd2"/><rect x="27.9" y="12.5" width="4.400" height="4.400" fill="#ffcdd2"/><rect x="27.9" y="18.2" width="4.400" height="4.400" fill="#ffcdd2"/><rect x="27.9" y="23.9" width="4.400" height="4.400" fill="#ffcdd2"/></svg><span class="lbl unt" style="left:56px;display:inline-block;transform:scaleX(1.0483);transform-origin:0 50%;letter-spacing:0;">app</span><span class="dot" style="background:#73c991;opacity:.55"></span></div><div class="row" style="top:79.86px;"><svg class="ci " width="16" height="16" viewBox="0 0 16 16" style="left:23px;top:3px"><path fill="#cccccc" d="M8 10.1 12.3 5.7 13 6.3 8.3 11H7.7L3 6.3L3.6 5.7Z"/></svg><svg class="abs" style="left:42.5px;top:3px;overflow:visible" width="16" height="16" viewBox="0 0 32 32"><path fill="#ef5350" d="M28.970 12H9.440a2 2 0 0 0-1.900 1.370L4 24V10h24a2 2 0 0 0-2-2H15.120a2 2 0 0 1-1.280-.460l-1.290-1.080A2 2 0 0 0 11.280 6H4a2 2 0 0 0-2 2v16a2 2 0 0 0 2 2h22l4.800-11.210A2 2 0 0 0 28.970 12z"/><rect x="15.500" y="10" width="17" height="20" rx="2.400" fill="#ffcdd2"/><rect x="18" y="17" width="12" height="8.500" fill="#ef5350"/><rect x="18" y="20.600" width="12" height="1.400" fill="#ffcdd2"/></svg><span class="lbl mod" style="left:64px;display:inline-block;transform:scaleX(1.0145);transform-origin:0 50%;letter-spacing:0;">Models</span><span class="dot" style="background:#e2c08d;opacity:.55"></span></div><div class="abs" style="left:0;top:722.96px;width:360px;height:22px;background:#181818;border-top:1px solid #2b2b2b"><svg class="ci " width="16" height="16" viewBox="0 0 16 16" style="left:1.500px;top:2.5px"><path fill="#cccccc" d="M10.1 8 5.7 3.7 6.3 3 11 7.7V8.3L6.3 13L5.7 12.4Z"/></svg><span class="t" style="left:20px;top:4.5px;font-size:11px;font-weight:700;line-height:13px;color:#cccccc;display:inline-block;transform:scaleX(0.9803);transform-origin:0 50%;letter-spacing:0;">OUTLINE</span></div><div class="abs" style="left:0;top:745.04px;width:360px;height:22px;background:#181818;border-top:1px solid #2b2b2b"><svg class="ci " width="16" height="16" viewBox="0 0 16 16" style="left:1.500px;top:2.5px"><path fill="#cccccc" d="M10.1 8 5.7 3.7 6.3 3 11 7.7V8.3L6.3 13L5.7 12.4Z"/></svg><span class="t" style="left:20px;top:4.5px;font-size:11px;font-weight:700;line-height:13px;color:#cccccc;display:inline-block;transform:scaleX(0.9779);transform-origin:0 50%;letter-spacing:0;">TIMELINE</span></div></div>
<div id="ed"><div id="tabs"><div class="tab" style="left:0.5px;width:121.1px;background:#1f1f1f;height:36px;"><svg class="abs" style="left:9.6px;top:9.8px;overflow:visible" width="16" height="16" viewBox="0 0 32 32"><ellipse cx="16" cy="16" rx="16.300" ry="8.400" fill="#1e88e5"/><text x="15.600" y="19.600" font-family="Liberation Sans,sans-serif" font-size="13" font-style="italic" font-weight="700" text-anchor="middle" fill="#0a2f5c" letter-spacing="-0.7">php</text></svg><span class="lbl mod" style="left:32.5px;top:11px;display:inline-block;transform:scaleX(1.0127);transform-origin:0 50%;letter-spacing:0;">api.php</span><span class="lbl mod" style="left:81.2px;top:11px;font-size:12px;letter-spacing:0">M</span><svg class="ci " width="16" height="16" viewBox="0 0 16 16" style="left:98.6px;top:9.5px"><path fill="#cccccc" d="M8 8.7 11.6 12.4 12.4 11.6 8.7 8 12.4 4.4 11.6 3.6 8 7.3 4.4 3.6 3.6 4.4 7.3 8 3.6 11.6 4.4 12.4Z"/></svg></div><div class="tab" style="left:121.6px;width:181.5px;height:34px;"><svg class="abs" style="left:9.6px;top:9.8px;overflow:visible" width="16" height="16" viewBox="0 0 32 32"><ellipse cx="16" cy="16" rx="16.300" ry="8.400" fill="#1e88e5"/><text x="15.600" y="19.600" font-family="Liberation Sans,sans-serif" font-size="13" font-style="italic" font-weight="700" text-anchor="middle" fill="#0a2f5c" letter-spacing="-0.7">php</text></svg><span class="lbl unt" style="left:32.5px;top:11px;display:inline-block;transform:scaleX(0.9920);transform-origin:0 50%;letter-spacing:0;">FaqsController.php</span><span class="lbl unt" style="left:147.0px;top:11px;font-size:12px;letter-spacing:0">U</span></div><div class="tab" style="left:303.1px;width:196.8px;height:34px;"><svg class="abs" style="left:9.6px;top:9.8px;overflow:visible" width="16" height="16" viewBox="0 0 32 32"><ellipse cx="16" cy="16" rx="16.300" ry="8.400" fill="#1e88e5"/><text x="15.600" y="19.600" font-family="Liberation Sans,sans-serif" font-size="13" font-style="italic" font-weight="700" text-anchor="middle" fill="#0a2f5c" letter-spacing="-0.7">php</text></svg><span class="lbl unt" style="left:32.5px;top:11px;display:inline-block;transform:scaleX(1.0062);transform-origin:0 50%;letter-spacing:0;">GalleryController.php</span><span class="lbl unt" style="left:160.9px;top:11px;font-size:12px;letter-spacing:0">U</span></div><div class="tab" style="left:499.9px;width:141.1px;height:34px;"><svg class="abs" style="left:9.6px;top:9.8px;overflow:visible" width="16" height="16" viewBox="0 0 32 32"><ellipse cx="16" cy="16" rx="16.300" ry="8.400" fill="#1e88e5"/><text x="15.600" y="19.600" font-family="Liberation Sans,sans-serif" font-size="13" font-style="italic" font-weight="700" text-anchor="middle" fill="#0a2f5c" letter-spacing="-0.7">php</text></svg><span class="lbl mod" style="left:32.5px;top:11px;display:inline-block;transform:scaleX(0.9964);transform-origin:0 50%;letter-spacing:0;">Gallery.php</span><span class="lbl mod" style="left:103.3px;top:11px;font-size:12px;letter-spacing:0">M</span></div><div class="tab" style="left:641.0px;width:145.2px;height:34px;"><svg class="abs" style="left:9.6px;top:9.8px;overflow:visible" width="16" height="16" viewBox="0 0 32 32"><ellipse cx="16" cy="16" rx="16.300" ry="8.400" fill="#1e88e5"/><text x="15.600" y="19.600" font-family="Liberation Sans,sans-serif" font-size="13" font-style="italic" font-weight="700" text-anchor="middle" fill="#0a2f5c" letter-spacing="-0.7">php</text></svg><span class="lbl ign2" style="left:32.5px;top:11px;font-style:italic;display:inline-block;transform:scaleX(0.9404);transform-origin:0 50%;letter-spacing:0;">BaseModel.php</span></div><div class="tab" style="left:786.2px;width:182.2px;height:34px;"><svg class="abs" style="left:9.6px;top:9.8px;overflow:visible" width="16" height="16" viewBox="0 0 32 32"><ellipse cx="16" cy="16" rx="16.300" ry="8.400" fill="#1e88e5"/><text x="15.600" y="19.600" font-family="Liberation Sans,sans-serif" font-size="13" font-style="italic" font-weight="700" text-anchor="middle" fill="#0a2f5c" letter-spacing="-0.7">php</text></svg><span class="lbl unt" style="left:32.5px;top:11px;display:inline-block;transform:scaleX(0.9707);transform-origin:0 50%;letter-spacing:0;">HasTranslation.php</span><span class="lbl unt" style="left:147.0px;top:11px;font-size:12px;letter-spacing:0">U</span></div><svg class="abs" style="left:978.8px;top:9.799999999999997px;overflow:visible" width="16" height="16" viewBox="0 0 32 32"><ellipse cx="16" cy="16" rx="16.300" ry="8.400" fill="#1e88e5"/><text x="15.600" y="19.600" font-family="Liberation Sans,sans-serif" font-size="13" font-style="italic" font-weight="700" text-anchor="middle" fill="#0a2f5c" letter-spacing="-0.7">php</text></svg><svg class="ci " width="16" height="16" viewBox="0 0 16 16" style="left:1004.8px;top:9.799999999999997px"><path fill="#cccccc" d="M3.8 2 3 2.4V14.4L3.8 14.8L12.8 8.9V8ZM4 13.5V3.4L11.6 8.4Z"/></svg><svg class="ci " width="12" height="12" viewBox="0 0 16 16" style="left:1023.0px;top:11.799999999999997px"><path fill="#cccccc" d="M8 10.1 12.3 5.7 13 6.3 8.3 11H7.7L3 6.3L3.6 5.7Z"/></svg><svg class="ci " width="16" height="16" viewBox="0 0 16 16" style="left:1044.0px;top:9.799999999999997px"><path fill="#cccccc" d="M7.4 13 6.1 11.7 6.8 11 8.9 13.2V13.9L6.8 16L6.1 15.3L7.4 14H5.5Q4.5 14 3.7 13.3Q3 12.5 3 11.5V6Q2.2 5.8 1.7 5.3Q1.2 4.7 1 4Q0.9 3.3 1.2 2.6Q1.5 1.9 2.1 1.4Q2.7 1 3.5 1Q4 1 4.5 1.2Q5.4 1.6 5.9 2.6Q6 3 6 3.5Q6 4.4 5.5 5.1Q4.9 5.8 4.1 6V11.5Q4.1 12.1 4.5 12.6Q4.9 13 5.5 13ZM2.7 4.7Q3.1 5 3.7 5Q4.2 4.9 4.6 4.5Q5 4.2 5 3.6Q5.1 3.1 4.8 2.7Q4.5 2.3 4.1 2.1Q3.7 1.9 3.3 2Q2.8 2.1 2.5 2.4Q2.1 2.8 2.1 3.2Q2 3.6 2.2 4.1Q2.3 4.5 2.7 4.7ZM13 11Q13.8 11.2 14.3 11.7Q14.9 12.4 15 13.3Q15.1 14.1 14.6 14.9Q14.2 15.5 13.5 15.8Q12.8 16.1 12.1 15.9Q11.3 15.8 10.8 15.3Q10.2 14.7 10.1 14Q9.9 13.2 10.2 12.5Q10.5 11.8 11.1 11.4Q11.6 11.1 12.1 11V5.5Q12.1 4.9 11.6 4.4Q11.1 4 10.6 4H8.7L10 5.3L9.2 6L7.1 3.8V3.1L9.2 1L10 1.7L8.7 3H10.6Q11.6 3 12.3 3.7Q13.1 4.4 13 5.5ZM12.7 15Q13.1 14.9 13.4 14.7Q13.7 14.5 13.9 14.1Q14.1 13.8 14.1 13.4Q14 13 13.8 12.6Q13.5 12.3 13.1 12.1Q12.7 11.9 12.2 12Q11.8 12.1 11.5 12.4Q11.1 12.7 11.1 13.2Q11 13.7 11.2 14.1Q11.4 14.5 11.8 14.8Q12.2 15 12.7 15Z"/></svg><svg class="ci " width="16" height="16" viewBox="0 0 16 16" style="left:1070.5px;top:9.799999999999997px"><path fill="#cccccc" d="M14 1H3L2 2V13L3 14H14L15 13V2ZM8 13H3V2H8ZM14 13H9V2H14Z"/></svg><svg class="ci " width="16" height="16" viewBox="0 0 16 16" style="left:1096.4px;top:9.799999999999997px"><path fill="#cccccc" d="M4 8Q4 8.4 3.7 8.7Q3.4 9 3 9Q2.6 9 2.3 8.7Q2 8.4 2 8Q2 7.6 2.3 7.3Q2.6 7 3 7Q3.4 7 3.7 7.3Q4 7.6 4 8ZM9 8Q9 8.4 8.7 8.7Q8.4 9 8 9Q7.6 9 7.3 8.7Q7 8.4 7 8Q7 7.6 7.3 7.3Q7.6 7 8 7Q8.4 7 8.7 7.3Q9 7.6 9 8ZM14 8Q14 8.4 13.7 8.7Q13.4 9 13 9Q12.6 9 12.3 8.7Q12 8.4 12 8Q12 7.6 12.3 7.3Q12.6 7 13 7Q13.4 7 13.7 7.3Q14 7.6 14 8Z"/></svg></div><div id="bc"><span class="t" style="left:16.3px;color:#a9a9a9;top:3.5px;line-height:15px;display:inline-block;transform:scaleX(1.0094);transform-origin:0 50%;letter-spacing:0;">routes</span><svg class="ci " width="16" height="16" viewBox="0 0 16 16" style="left:53px;top:3px"><path fill="#a9a9a9" d="M10.1 8 5.7 3.7 6.3 3 11 7.7V8.3L6.3 13L5.7 12.4Z"/></svg><svg class="abs" style="left:68px;top:3px;overflow:visible" width="16" height="16" viewBox="0 0 32 32"><ellipse cx="16" cy="16" rx="16.300" ry="8.400" fill="#1e88e5"/><text x="15.600" y="19.600" font-family="Liberation Sans,sans-serif" font-size="13" font-style="italic" font-weight="700" text-anchor="middle" fill="#0a2f5c" letter-spacing="-0.7">php</text></svg><span class="t" style="left:90.2px;color:#a9a9a9;top:3.5px;line-height:15px;display:inline-block;transform:scaleX(1.0127);transform-origin:0 50%;letter-spacing:0;">api.php</span><svg class="ci " width="16" height="16" viewBox="0 0 16 16" style="left:133.5px;top:3px"><path fill="#a9a9a9" d="M10.1 8 5.7 3.7 6.3 3 11 7.7V8.3L6.3 13L5.7 12.4Z"/></svg><svg class="ci " width="16" height="16" viewBox="0 0 16 16" style="left:149.20000000000005px;top:3px"><path fill="#b180d7" d="M13.5 4 8.5 1H7.5L2.5 4L2 4.9V10.9L2.5 11.7L7.5 14.7H8.5L13.5 11.7L14 10.9V4.9ZM7.5 13.5 3 10.9V5.7L7.5 8.2ZM3.3 4.7 8 1.9 12.7 4.7 8 7.3ZM13 10.9 8.5 13.5V8.2L13 5.7Z"/></svg><span class="t" style="left:168.4px;color:#a9a9a9;top:3.5px;line-height:15px;display:inline-block;transform:scaleX(0.9697);transform-origin:0 50%;letter-spacing:0;">Closure</span></div><div id="code"><div class="abs" style="left:68px;top:341.50px;width:949px;height:19px;border-top:1px solid #2a2a2a;border-bottom:1px solid #2a2a2a"></div><div class="abs" style="left:68px;top:341.50px;width:1px;height:38px;background:#707070"></div><div class="abs" style="left:68px;top:474.50px;width:1px;height:38px;background:#404040"></div><div class="abs" style="left:175.30px;top:342.00px;width:8.70px;height:18px;border:1px solid #808080;background:rgba(0,100,0,.04)"></div><div class="abs" style="left:306.20px;top:342.00px;width:8.70px;height:18px;border:1px solid #808080;background:rgba(0,100,0,.04)"></div><div class="ln" style="top:-0.80px;">16</div><div class="ln" style="top:18.20px;">17</div><div class="ln" style="top:37.20px;">18</div><div class="ln" style="top:56.20px;">19</div><div class="ln" style="top:75.20px;">20</div><div class="cl" style="top:75.20px"><span class="c">Route</span>::<span class="f">get</span><span class="b1">(</span><span class="s">'/home' </span>, <span class="b2">[</span><span class="c">HomeController</span>::<span class="k">class </span>, <span class="s">'getHomeData'</span><span class="b2">]</span><span class="b1">)</span>;</div><div class="ln" style="top:94.20px;">21</div><div class="ln" style="top:113.20px;">22</div><div class="cl" style="top:113.20px"><span class="c">Route</span>::<span class="f">post</span><span class="b1">(</span><span class="s">'/contact'</span>, <span class="b2">[</span><span class="c">ContactController</span>::<span class="k">class </span>, <span class="s">'addContact'</span><span class="b2">]</span><span class="b1">)</span>;</div><div class="ln" style="top:132.20px;">23</div><div class="cl" style="top:132.20px"><span class="c">Route</span>::<span class="f">post</span><span class="b1">(</span><span class="s">'/volunteer'</span>, <span class="b2">[</span><span class="c">ContactController</span>::<span class="k">class </span>, <span class="s">'addVolunteer'</span><span class="b2">]</span><span class="b1">)</span>;</div><div class="ln" style="top:151.20px;">24</div><div class="ln" style="top:170.20px;">25</div><div class="cl" style="top:170.20px"><span class="c">Route</span>::<span class="f">get</span><span class="b1">(</span><span class="s">'about' </span>, <span class="b2">[</span><span class="c">AppInfoController</span>::<span class="k">class </span>,<span class="s">'aboutUs'</span><span class="b2">]</span><span class="b1">)</span>;</div><div class="ln" style="top:189.20px;">26</div><div class="cl" style="top:189.20px"><span class="c">Route</span>::<span class="f">get</span><span class="b1">(</span><span class="s">'privacy' </span>, <span class="b2">[</span><span class="c">AppInfoController</span>::<span class="k">class </span>,<span class="s">'privacy'</span><span class="b2">]</span><span class="b1">)</span>;</div><div class="ln" style="top:208.20px;">27</div><div class="ln" style="top:227.20px;">28</div><div class="cl" style="top:227.20px"><span class="c">Route</span>::<span class="f">get</span><span class="b1">(</span><span class="s">'faqs' </span>, <span class="b2">[</span><span class="c">FaqsController</span>::<span class="k">class </span>,<span class="s">'faqs'</span><span class="b2">]</span><span class="b1">)</span>;</div><div class="ln" style="top:246.20px;">29</div><div class="cl" style="top:246.20px"><span class="c">Route</span>::<span class="f">get</span><span class="b1">(</span><span class="s">'gallery' </span>, <span class="b2">[</span><span class="c">GalleryController</span>::<span class="k">class </span>,<span class="s">'gallery'</span><span class="b2">]</span><span class="b1">)</span>;</div><div class="ln" style="top:265.20px;">30</div><div class="ln" style="top:284.20px;">31</div><div class="ln" style="top:303.20px;">32</div><div class="ln" style="top:322.20px;">33</div><div class="cl" style="top:322.20px"><span class="c">Route</span>::<span class="f">prefix</span><span class="b1">(</span><span class="s">'activity'</span><span class="b1">)</span>-&gt;<span class="f">controller</span><span class="b1">(</span><span class="c">ActivityController</span>::<span class="k">class</span><span class="b1">)</span>-&gt;<span class="f">group</span><span class="b1">(</span><span class="k">function </span><span class="b2">() {</span></div><div class="ln" style="top:341.20px;color:#cccccc;">34</div><div class="cl" style="top:341.20px">    <span class="c">Route</span>::<span class="f">get</span><span class="b3">(</span><span class="s">'{id}'</span>, <span class="s">'getOne'</span><span class="b3">)</span>;</div><div class="ln" style="top:360.20px;">35</div><div class="cl" style="top:360.20px">    <span class="c">Route</span>::<span class="f">get</span><span class="b3">(</span><span class="s">'/getAll'</span>, <span class="s">'getAll'</span><span class="b3">)</span>;</div><div class="ln" style="top:379.20px;">36</div><div class="cl" style="top:379.20px"><span class="b2">}</span><span class="b1">)</span>;</div><div class="ln" style="top:398.20px;">37</div><div class="ln" style="top:417.20px;">38</div><div class="ln" style="top:436.20px;">39</div><div class="ln" style="top:455.20px;">40</div><div class="cl" style="top:455.20px"><span class="c">Route</span>::<span class="f">prefix</span><span class="b1">(</span><span class="s">'post'</span><span class="b1">)</span>-&gt;<span class="f">controller</span><span class="b1">(</span><span class="c">PostController</span>::<span class="k">class</span><span class="b1">)</span>-&gt;<span class="f">group</span><span class="b1">(</span><span class="k">function </span><span class="b2">() {</span></div><div class="ln" style="top:474.20px;">41</div><div class="cl" style="top:474.20px">    <span class="c">Route</span>::<span class="f">get</span><span class="b3">(</span><span class="s">'{id}'</span>, <span class="s">'getOne'</span><span class="b3">)</span>;</div><div class="ln" style="top:493.20px;">42</div><div class="cl" style="top:493.20px">    <span class="c">Route</span>::<span class="f">get</span><span class="b3">(</span><span class="s">'/getAll'</span>, <span class="s">'getAll'</span><span class="b3">)</span>;</div><div class="ln" style="top:512.20px;">43</div><div class="cl" style="top:512.20px"><span class="b2">}</span><span class="b1">)</span>;</div><div class="ln" style="top:531.20px;">44</div><div class="ln" style="top:550.20px;">45</div><div class="abs" style="left:214.30px;top:342.50px;width:2px;height:17px;background:#aeafad"></div><div class="abs" style="left:46.8px;top:-0.50px;width:3.500px;height:380px;background:repeating-linear-gradient(-45deg,#2483d8 0 1.1px,#164872 1.1px 2.2px)"></div><div class="abs" style="left:46.8px;top:398.50px;width:3.500px;height:38px;background:repeating-linear-gradient(-45deg,#2483d8 0 1.1px,#164872 1.1px 2.2px)"></div><div class="abs" style="left:46.8px;top:455.50px;width:3.500px;height:57px;background:repeating-linear-gradient(-45deg,#2483d8 0 1.1px,#164872 1.1px 2.2px)"></div> <svg class="abs" style="left:46.8px;top:565.50px" width="5" height="8" viewBox="0 0 5 8"><path d="M0 0L5 4 0 8z" fill="#f85149"/></svg><div class="abs" style="left:0;top:0;width:1113px;height:6px;box-shadow:inset 0 6px 6px -6px #000"></div><svg class="abs" style="left:1024px;top:0.2px" width="90" height="80" viewBox="0 0 90 80"><path fill="#569cd6" opacity=".48" d="M0.0 0.0h4.0v1.06h-4.0zM0.0 3.2h2.4v1.06h-2.4zM0.0 4.8h2.4v1.06h-2.4zM0.0 6.4h2.4v1.06h-2.4zM0.0 8.0h2.4v1.06h-2.4zM0.0 9.6h2.4v1.06h-2.4zM0.0 11.2h2.4v1.06h-2.4zM0.0 12.8h2.4v1.06h-2.4zM0.0 14.4h2.4v1.06h-2.4zM0.0 16.0h2.4v1.06h-2.4zM0.0 17.6h2.4v1.06h-2.4zM0.0 19.2h2.4v1.06h-2.4zM30.4 30.4h4.0v1.06h-4.0zM35.2 33.6h4.0v1.06h-4.0zM36.8 35.2h4.0v1.06h-4.0zM32.8 38.4h4.0v1.06h-4.0zM34.4 40.0h4.0v1.06h-4.0zM29.6 43.2h4.0v1.06h-4.0zM34.4 44.8h4.0v1.06h-4.0zM46.4 51.2h4.0v1.06h-4.0zM57.6 51.2h6.4v1.06h-6.4zM40.0 62.4h4.0v1.06h-4.0zM51.2 62.4h6.4v1.06h-6.4z"/><path fill="#cccccc" opacity=".48" d="M3.2 3.2h2.4v1.06h-2.4zM5.6 3.2h0.8v1.06h-0.8zM6.4 3.2h3.2v1.06h-3.2zM9.6 3.2h0.8v1.06h-0.8zM10.4 3.2h8.8v1.06h-8.8zM19.2 3.2h0.8v1.06h-0.8zM20.0 3.2h2.4v1.06h-2.4zM22.4 3.2h0.8v1.06h-0.8zM37.6 3.2h0.8v1.06h-0.8zM3.2 4.8h2.4v1.06h-2.4zM5.6 4.8h0.8v1.06h-0.8zM6.4 4.8h3.2v1.06h-3.2zM9.6 4.8h0.8v1.06h-0.8zM10.4 4.8h8.8v1.06h-8.8zM19.2 4.8h0.8v1.06h-0.8zM20.0 4.8h2.4v1.06h-2.4zM22.4 4.8h0.8v1.06h-0.8zM36.8 4.8h0.8v1.06h-0.8zM3.2 6.4h2.4v1.06h-2.4zM5.6 6.4h0.8v1.06h-0.8zM6.4 6.4h3.2v1.06h-3.2zM9.6 6.4h0.8v1.06h-0.8zM10.4 6.4h8.8v1.06h-8.8zM19.2 6.4h0.8v1.06h-0.8zM20.0 6.4h2.4v1.06h-2.4zM22.4 6.4h0.8v1.06h-0.8zM36.8 6.4h0.8v1.06h-0.8zM3.2 8.0h2.4v1.06h-2.4zM5.6 8.0h0.8v1.06h-0.8zM6.4 8.0h3.2v1.06h-3.2zM9.6 8.0h0.8v1.06h-0.8zM10.4 8.0h8.8v1.06h-8.8zM19.2 8.0h0.8v1.06h-0.8zM20.0 8.0h2.4v1.06h-2.4zM22.4 8.0h0.8v1.06h-0.8zM34.4 8.0h0.8v1.06h-0.8zM3.2 9.6h2.4v1.06h-2.4zM5.6 9.6h0.8v1.06h-0.8zM6.4 9.6h3.2v1.06h-3.2zM9.6 9.6h0.8v1.06h-0.8zM10.4 9.6h8.8v1.06h-8.8zM19.2 9.6h0.8v1.06h-0.8zM20.0 9.6h2.4v1.06h-2.4zM22.4 9.6h0.8v1.06h-0.8zM36.8 9.6h0.8v1.06h-0.8zM3.2 11.2h2.4v1.06h-2.4zM5.6 11.2h0.8v1.06h-0.8zM6.4 11.2h3.2v1.06h-3.2zM9.6 11.2h0.8v1.06h-0.8zM10.4 11.2h8.8v1.06h-8.8zM19.2 11.2h0.8v1.06h-0.8zM20.0 11.2h2.4v1.06h-2.4zM22.4 11.2h0.8v1.06h-0.8zM34.4 11.2h0.8v1.06h-0.8zM3.2 12.8h2.4v1.06h-2.4zM5.6 12.8h0.8v1.06h-0.8zM6.4 12.8h3.2v1.06h-3.2zM9.6 12.8h0.8v1.06h-0.8zM10.4 12.8h8.8v1.06h-8.8zM19.2 12.8h0.8v1.06h-0.8zM20.0 12.8h2.4v1.06h-2.4zM22.4 12.8h0.8v1.06h-0.8zM34.4 12.8h0.8v1.06h-0.8zM3.2 14.4h2.4v1.06h-2.4zM5.6 14.4h0.8v1.06h-0.8zM6.4 14.4h3.2v1.06h-3.2zM9.6 14.4h0.8v1.06h-0.8zM10.4 14.4h8.8v1.06h-8.8zM19.2 14.4h0.8v1.06h-0.8zM20.0 14.4h2.4v1.06h-2.4zM22.4 14.4h0.8v1.06h-0.8zM36.8 14.4h0.8v1.06h-0.8zM3.2 16.0h2.4v1.06h-2.4zM5.6 16.0h0.8v1.06h-0.8zM6.4 16.0h3.2v1.06h-3.2zM9.6 16.0h0.8v1.06h-0.8zM10.4 16.0h8.8v1.06h-8.8zM19.2 16.0h0.8v1.06h-0.8zM20.0 16.0h2.4v1.06h-2.4zM22.4 16.0h0.8v1.06h-0.8zM36.0 16.0h0.8v1.06h-0.8zM3.2 17.6h8.0v1.06h-8.0zM11.2 17.6h0.8v1.06h-0.8zM12.0 17.6h3.2v1.06h-3.2zM15.2 17.6h0.8v1.06h-0.8zM21.6 17.6h0.8v1.06h-0.8zM3.2 19.2h8.0v1.06h-8.0zM11.2 19.2h0.8v1.06h-0.8zM12.0 19.2h5.6v1.06h-5.6zM17.6 19.2h0.8v1.06h-0.8zM18.4 19.2h5.6v1.06h-5.6zM24.0 19.2h0.8v1.06h-0.8zM28.8 19.2h0.8v1.06h-0.8zM4.0 30.4h0.8v1.06h-0.8zM4.8 30.4h0.8v1.06h-0.8zM15.2 30.4h0.8v1.06h-0.8zM28.8 30.4h0.8v1.06h-0.8zM29.6 30.4h0.8v1.06h-0.8zM35.2 30.4h0.8v1.06h-0.8zM48.8 30.4h0.8v1.06h-0.8zM4.0 33.6h0.8v1.06h-0.8zM4.8 33.6h0.8v1.06h-0.8zM17.6 33.6h0.8v1.06h-0.8zM33.6 33.6h0.8v1.06h-0.8zM34.4 33.6h0.8v1.06h-0.8zM40.0 33.6h0.8v1.06h-0.8zM52.8 33.6h0.8v1.06h-0.8zM4.0 35.2h0.8v1.06h-0.8zM4.8 35.2h0.8v1.06h-0.8zM19.2 35.2h0.8v1.06h-0.8zM35.2 35.2h0.8v1.06h-0.8zM36.0 35.2h0.8v1.06h-0.8zM41.6 35.2h0.8v1.06h-0.8zM56.0 35.2h0.8v1.06h-0.8zM4.0 38.4h0.8v1.06h-0.8zM4.8 38.4h0.8v1.06h-0.8zM15.2 38.4h0.8v1.06h-0.8zM31.2 38.4h0.8v1.06h-0.8zM32.0 38.4h0.8v1.06h-0.8zM37.6 38.4h0.8v1.06h-0.8zM47.2 38.4h0.8v1.06h-0.8zM4.0 40.0h0.8v1.06h-0.8zM4.8 40.0h0.8v1.06h-0.8zM16.8 40.0h0.8v1.06h-0.8zM32.8 40.0h0.8v1.06h-0.8zM33.6 40.0h0.8v1.06h-0.8zM39.2 40.0h0.8v1.06h-0.8zM48.8 40.0h0.8v1.06h-0.8zM4.0 43.2h0.8v1.06h-0.8zM4.8 43.2h0.8v1.06h-0.8zM14.4 43.2h0.8v1.06h-0.8zM28.0 43.2h0.8v1.06h-0.8zM28.8 43.2h0.8v1.06h-0.8zM34.4 43.2h0.8v1.06h-0.8zM41.6 43.2h0.8v1.06h-0.8zM4.0 44.8h0.8v1.06h-0.8zM4.8 44.8h0.8v1.06h-0.8zM16.8 44.8h0.8v1.06h-0.8zM32.8 44.8h0.8v1.06h-0.8zM33.6 44.8h0.8v1.06h-0.8zM39.2 44.8h0.8v1.06h-0.8zM48.8 44.8h0.8v1.06h-0.8zM4.0 51.2h0.8v1.06h-0.8zM4.8 51.2h0.8v1.06h-0.8zM20.0 51.2h0.8v1.06h-0.8zM20.8 51.2h0.8v1.06h-0.8zM44.8 51.2h0.8v1.06h-0.8zM45.6 51.2h0.8v1.06h-0.8zM51.2 51.2h0.8v1.06h-0.8zM52.0 51.2h0.8v1.06h-0.8zM7.2 52.8h0.8v1.06h-0.8zM8.0 52.8h0.8v1.06h-0.8zM16.8 52.8h0.8v1.06h-0.8zM25.6 52.8h0.8v1.06h-0.8zM7.2 54.4h0.8v1.06h-0.8zM8.0 54.4h0.8v1.06h-0.8zM19.2 54.4h0.8v1.06h-0.8zM28.0 54.4h0.8v1.06h-0.8zM1.6 56.0h0.8v1.06h-0.8zM4.0 62.4h0.8v1.06h-0.8zM4.8 62.4h0.8v1.06h-0.8zM16.8 62.4h0.8v1.06h-0.8zM17.6 62.4h0.8v1.06h-0.8zM38.4 62.4h0.8v1.06h-0.8zM39.2 62.4h0.8v1.06h-0.8zM44.8 62.4h0.8v1.06h-0.8zM45.6 62.4h0.8v1.06h-0.8zM7.2 64.0h0.8v1.06h-0.8zM8.0 64.0h0.8v1.06h-0.8zM16.8 64.0h0.8v1.06h-0.8zM25.6 64.0h0.8v1.06h-0.8zM7.2 65.6h0.8v1.06h-0.8zM8.0 65.6h0.8v1.06h-0.8zM19.2 65.6h0.8v1.06h-0.8zM28.0 65.6h0.8v1.06h-0.8zM1.6 67.2h0.8v1.06h-0.8z"/><path fill="#4ec9b0" opacity=".48" d="M23.2 3.2h14.4v1.06h-14.4zM23.2 4.8h13.6v1.06h-13.6zM23.2 6.4h13.6v1.06h-13.6zM23.2 8.0h11.2v1.06h-11.2zM23.2 9.6h13.6v1.06h-13.6zM23.2 11.2h11.2v1.06h-11.2zM23.2 12.8h11.2v1.06h-11.2zM23.2 14.4h13.6v1.06h-13.6zM23.2 16.0h12.8v1.06h-12.8zM16.0 17.6h5.6v1.06h-5.6zM24.8 19.2h4.0v1.06h-4.0zM0.0 30.4h4.0v1.06h-4.0zM17.6 30.4h11.2v1.06h-11.2zM0.0 33.6h4.0v1.06h-4.0zM20.0 33.6h13.6v1.06h-13.6zM0.0 35.2h4.0v1.06h-4.0zM21.6 35.2h13.6v1.06h-13.6zM0.0 38.4h4.0v1.06h-4.0zM17.6 38.4h13.6v1.06h-13.6zM0.0 40.0h4.0v1.06h-4.0zM19.2 40.0h13.6v1.06h-13.6zM0.0 43.2h4.0v1.06h-4.0zM16.8 43.2h11.2v1.06h-11.2zM0.0 44.8h4.0v1.06h-4.0zM19.2 44.8h13.6v1.06h-13.6zM0.0 51.2h4.0v1.06h-4.0zM30.4 51.2h14.4v1.06h-14.4zM3.2 52.8h4.0v1.06h-4.0zM3.2 54.4h4.0v1.06h-4.0zM0.0 62.4h4.0v1.06h-4.0zM27.2 62.4h11.2v1.06h-11.2zM3.2 64.0h4.0v1.06h-4.0zM3.2 65.6h4.0v1.06h-4.0z"/><path fill="#dcdcaa" opacity=".48" d="M5.6 30.4h2.4v1.06h-2.4zM5.6 33.6h3.2v1.06h-3.2zM5.6 35.2h3.2v1.06h-3.2zM5.6 38.4h2.4v1.06h-2.4zM5.6 40.0h2.4v1.06h-2.4zM5.6 43.2h2.4v1.06h-2.4zM5.6 44.8h2.4v1.06h-2.4zM5.6 51.2h4.8v1.06h-4.8zM21.6 51.2h8.0v1.06h-8.0zM52.8 51.2h4.0v1.06h-4.0zM8.8 52.8h2.4v1.06h-2.4zM8.8 54.4h2.4v1.06h-2.4zM5.6 62.4h4.8v1.06h-4.8zM18.4 62.4h8.0v1.06h-8.0zM46.4 62.4h4.0v1.06h-4.0zM8.8 64.0h2.4v1.06h-2.4zM8.8 65.6h2.4v1.06h-2.4z"/><path fill="#ffd700" opacity=".48" d="M8.0 30.4h0.8v1.06h-0.8zM48.0 30.4h0.8v1.06h-0.8zM8.8 33.6h0.8v1.06h-0.8zM52.0 33.6h0.8v1.06h-0.8zM8.8 35.2h0.8v1.06h-0.8zM55.2 35.2h0.8v1.06h-0.8zM8.0 38.4h0.8v1.06h-0.8zM46.4 38.4h0.8v1.06h-0.8zM8.0 40.0h0.8v1.06h-0.8zM48.0 40.0h0.8v1.06h-0.8zM8.0 43.2h0.8v1.06h-0.8zM40.8 43.2h0.8v1.06h-0.8zM8.0 44.8h0.8v1.06h-0.8zM48.0 44.8h0.8v1.06h-0.8zM10.4 51.2h0.8v1.06h-0.8zM19.2 51.2h0.8v1.06h-0.8zM29.6 51.2h0.8v1.06h-0.8zM50.4 51.2h0.8v1.06h-0.8zM56.8 51.2h0.8v1.06h-0.8zM0.8 56.0h0.8v1.06h-0.8zM10.4 62.4h0.8v1.06h-0.8zM16.0 62.4h0.8v1.06h-0.8zM26.4 62.4h0.8v1.06h-0.8zM44.0 62.4h0.8v1.06h-0.8zM50.4 62.4h0.8v1.06h-0.8zM0.8 67.2h0.8v1.06h-0.8z"/><path fill="#ce9178" opacity=".48" d="M8.8 30.4h5.6v1.06h-5.6zM36.8 30.4h10.4v1.06h-10.4zM9.6 33.6h8.0v1.06h-8.0zM41.6 33.6h9.6v1.06h-9.6zM9.6 35.2h9.6v1.06h-9.6zM43.2 35.2h11.2v1.06h-11.2zM8.8 38.4h5.6v1.06h-5.6zM38.4 38.4h7.2v1.06h-7.2zM8.8 40.0h7.2v1.06h-7.2zM40.0 40.0h7.2v1.06h-7.2zM8.8 43.2h4.8v1.06h-4.8zM35.2 43.2h4.8v1.06h-4.8zM8.8 44.8h7.2v1.06h-7.2zM40.0 44.8h7.2v1.06h-7.2zM11.2 51.2h8.0v1.06h-8.0zM12.0 52.8h4.8v1.06h-4.8zM18.4 52.8h6.4v1.06h-6.4zM12.0 54.4h7.2v1.06h-7.2zM20.8 54.4h6.4v1.06h-6.4zM11.2 62.4h4.8v1.06h-4.8zM12.0 64.0h4.8v1.06h-4.8zM18.4 64.0h6.4v1.06h-6.4zM12.0 65.6h7.2v1.06h-7.2zM20.8 65.6h6.4v1.06h-6.4z"/><path fill="#da70d6" opacity=".48" d="M16.8 30.4h0.8v1.06h-0.8zM47.2 30.4h0.8v1.06h-0.8zM19.2 33.6h0.8v1.06h-0.8zM51.2 33.6h0.8v1.06h-0.8zM20.8 35.2h0.8v1.06h-0.8zM54.4 35.2h0.8v1.06h-0.8zM16.8 38.4h0.8v1.06h-0.8zM45.6 38.4h0.8v1.06h-0.8zM18.4 40.0h0.8v1.06h-0.8zM47.2 40.0h0.8v1.06h-0.8zM16.0 43.2h0.8v1.06h-0.8zM40.0 43.2h0.8v1.06h-0.8zM18.4 44.8h0.8v1.06h-0.8zM47.2 44.8h0.8v1.06h-0.8zM64.8 51.2h0.8v1.06h-0.8zM65.6 51.2h0.8v1.06h-0.8zM67.2 51.2h0.8v1.06h-0.8zM0.0 56.0h0.8v1.06h-0.8zM58.4 62.4h0.8v1.06h-0.8zM59.2 62.4h0.8v1.06h-0.8zM60.8 62.4h0.8v1.06h-0.8zM0.0 67.2h0.8v1.06h-0.8z"/><path fill="#179fff" opacity=".48" d="M11.2 52.8h0.8v1.06h-0.8zM24.8 52.8h0.8v1.06h-0.8zM11.2 54.4h0.8v1.06h-0.8zM27.2 54.4h0.8v1.06h-0.8zM11.2 64.0h0.8v1.06h-0.8zM24.8 64.0h0.8v1.06h-0.8zM11.2 65.6h0.8v1.06h-0.8zM27.2 65.6h0.8v1.06h-0.8z"/></svg><div class="abs" style="left:1019px;top:3.4px;width:2px;height:11.2px;background:#1a6fb8"></div><div class="abs" style="left:1019px;top:24.2px;width:2px;height:32.0px;background:#1a6fb8"></div><div class="abs" style="left:1019px;top:57.8px;width:2px;height:3.2px;background:#1a6fb8"></div><div class="abs" style="left:1019px;top:62.6px;width:2px;height:4.8px;background:#1a6fb8"></div><div class="abs" style="left:1019px;top:14.1px;width:1.7px;height:1.7px;background:#c9463f"></div><div class="abs" style="left:1019px;top:70.8px;width:1.7px;height:1.7px;background:#c9463f"></div><div class="abs" style="left:1113px;top:0;width:14px;height:710px;border-left:1px solid #0a0a0a"></div><div class="abs" style="left:1114px;top:130.4px;width:13px;height:326.7px;background:rgba(121,121,121,.4)"></div><div class="abs" style="left:1114px;top:16.3px;width:4.500px;height:62.9px;background:#1b65a6"></div><div class="abs" style="left:1114px;top:79.2px;width:4.500px;height:8.5px;background:#b3443e"></div><div class="abs" style="left:1114px;top:130.4px;width:4.500px;height:173.9px;background:#3f6f9f"></div><div class="abs" style="left:1114px;top:313.6px;width:4.500px;height:18.1px;background:#3f6f9f"></div><div class="abs" style="left:1114px;top:340.3px;width:4.500px;height:25.6px;background:#3f6f9f"></div><div class="abs" style="left:1114px;top:383.7px;width:4.500px;height:9.1px;background:#a9615c"></div><div class="abs" style="left:1114px;top:287.2px;width:13px;height:1.500px;background:#a0a0a0"></div></div></div>
<div id="status"><div class="abs" style="left:0;top:-1px;width:33.6px;height:22px;background:#0078d4"></div><svg class="ci " width="16" height="16" viewBox="0 0 16 16" style="left:8.3px;top:2.500px"><path fill="#ffffff" d="M12.9 9.5 8.9 5.6 12.9 1.6 12.3 1 8 5.3V5.9L12.3 10.2ZM3 5.6 7.1 9.7 3 13.8 3.6 14.4 8 10V9.4L3.6 5Z"/></svg><svg class="ci " width="14" height="14" viewBox="0 0 16 16" style="left:39.9px;top:3.7px"><path fill="#cccccc" d="M14 5.5Q14 4.8 13.7 4.2Q13.3 3.6 12.6 3.3Q12 2.9 11.3 3Q10.6 3 10 3.5Q9.4 3.9 9.2 4.6Q9 5.2 9.1 5.9Q9.2 6.6 9.7 7.1Q10.1 7.6 10.8 7.8Q10.6 8.4 10.1 8.7Q9.6 9 9 9H7Q5.9 9 5 9.8V4.9Q6 4.7 6.5 4Q7.1 3.2 7 2.2Q6.9 1.3 6.2 0.6Q5.5 0 4.5 0Q3.6 0 2.9 0.6Q2.1 1.3 2.1 2.2Q2 3.2 2.5 4Q3.1 4.7 4.1 4.9V11Q3.1 11.2 2.5 11.9Q1.9 12.7 2 13.7Q2.1 14.6 2.7 15.3Q3.4 15.9 4.4 16Q5.3 16.1 6.1 15.5Q6.8 14.9 7 13.9Q7.1 13 6.7 12.2Q6.2 11.4 5.2 11.1Q5.5 10.6 6 10.3Q6.5 10 7 10H9Q10 10 10.7 9.4Q11.5 8.9 11.8 7.9Q12.7 7.8 13.4 7.1Q14 6.4 14 5.5ZM3 2.5Q3 1.9 3.5 1.4Q3.9 1 4.5 1Q5.2 1 5.6 1.4Q6 1.9 6 2.5Q6 3.1 5.6 3.5Q5.2 4 4.5 4Q3.9 4 3.5 3.5Q3 3.1 3 2.5ZM6 13.4Q6 14.1 5.6 14.5Q5.2 14.9 4.5 14.9Q3.9 14.9 3.5 14.5Q3 14.1 3 13.5Q3 12.9 3.5 12.4Q3.9 11.9 4.5 11.9Q5.2 11.9 5.6 12.4Q6 12.9 6 13.4ZM11.5 7Q10.9 7 10.5 6.5Q10 6.1 10 5.5Q10 4.9 10.5 4.4Q10.9 4 11.5 4Q12.1 4 12.6 4.4Q13 4.9 13 5.5Q13 6.1 12.6 6.5Q12.1 7 11.5 7Z"/></svg><span class="t" style="left:57.6px;display:inline-block;transform:scaleX(1.0323);transform-origin:0 50%;letter-spacing:0;">main*</span><svg class="ci " width="14" height="14" viewBox="0 0 16 16" style="left:94.7px;top:3.7px"><path fill="#cccccc" d="M2 8.3 0.8 9.5 0 8.7 2.1 6.7H2.8L5 8.8L4.2 9.5L3 8.4Q3.1 10 4.2 11.3Q5.3 12.5 7 12.9Q8.6 13.2 10.1 12.5Q11.6 11.8 12.4 10.3L13.2 10.9Q12.2 12.7 10.4 13.5Q8.5 14.3 6.6 13.8Q4.6 13.4 3.4 11.8Q2.1 10.3 2 8.3ZM13 7.8 11.8 6.6 11 7.3 13.1 9.4H13.9L15.9 7.4L15.2 6.6L14 7.8Q13.9 5.8 12.7 4.3Q11.5 2.7 9.5 2.2Q7.6 1.7 5.8 2.4Q3.9 3.1 2.9 4.9L3.7 5.4Q4.5 4 6.1 3.4Q7.6 2.7 9.2 3.1Q10.8 3.6 11.9 4.9Q12.9 6.1 13 7.8Z"/></svg><svg class="ci " width="14" height="14" viewBox="0 0 16 16" style="left:122.4px;top:3.7px"><path fill="#cccccc" d="M8.6 1Q9.8 1.1 10.9 1.6Q11.9 2.1 12.8 3Q14.8 5.2 14.8 8.1Q14.8 10.4 13.2 12.5Q12.4 13.4 11.4 14.1Q10.4 14.7 9.2 14.9Q6.7 15.4 4.6 14.2Q3.5 13.6 2.7 12.7Q1.9 11.8 1.5 10.7Q1.1 9.5 1 8.3Q0.9 7.1 1.3 6Q2.1 3.5 4.1 2.2Q5.1 1.5 6.2 1.2Q7.4 0.9 8.6 1ZM9.1 13.9Q11.1 13.4 12.5 11.8Q13.8 10 13.7 8Q13.7 6.8 13.3 5.7Q12.8 4.5 12 3.7Q10.5 2.1 8.4 2Q7.4 1.9 6.4 2.2Q5.4 2.4 4.6 3Q2.9 4.3 2.3 6.3Q1.7 8.4 2.5 10.3Q3.4 12.3 5.2 13.3Q6.1 13.8 7.1 14Q8.1 14.1 9.1 13.9ZM7.9 7.5 10.3 5 11 5.7 8.6 8.2 11 10.7 10.3 11.4 7.9 8.9 5.5 11.4 4.8 10.7 7.2 8.2 4.8 5.7 5.5 5Z"/></svg><span class="t" style="left:140px">0</span><svg class="ci " width="14" height="14" viewBox="0 0 16 16" style="left:150.0px;top:3.7px"><path fill="#cccccc" d="M7.6 1H8.4L15 13.3L14.6 14H1.4L1 13.3ZM8 2.3 2.3 13H13.7ZM8.6 12V11H7.4V12ZM7.4 10V6H8.6V10Z"/></svg><span class="t" style="left:166.9px">0</span><svg class="ci " width="14" height="14" viewBox="0 0 16 16" style="left:190.0px;top:3.7px"><path fill="#cccccc" d="M3 5.6Q3 4.5 3.4 3.5Q3.8 2.5 4.6 1.7L3.9 1Q3 1.9 2.5 3.1Q2 4.3 2 5.6Q2 6.9 2.5 8.1Q3 9.2 3.9 10.1L4.6 9.4Q3.8 8.7 3.4 7.7Q3 6.7 3 5.6ZM4.1 5.6Q4.1 6.5 4.4 7.3Q4.7 8.1 5.4 8.7L6.1 8.1Q5.6 7.6 5.3 6.9Q5.1 6.3 5.1 5.6Q5.1 4.9 5.3 4.3Q5.6 3.6 6.1 3.1L5.4 2.4Q4.7 3 4.4 3.9Q4.1 4.7 4.1 5.6ZM11.7 8.8 11 8.1Q11.5 7.6 11.8 6.9Q12.1 6.3 12.1 5.6Q12.1 4.9 11.8 4.3Q11.5 3.6 11 3.1L11.7 2.5Q12.3 3.1 12.7 3.9Q13 4.7 13 5.6Q13 6.5 12.7 7.3Q12.3 8.2 11.7 8.8ZM13.1 1 12.4 1.7Q13.1 2.5 13.5 3.5Q14 4.5 14 5.6Q14 6.7 13.5 7.7Q13.1 8.7 12.4 9.4L13.1 10.1Q14 9.2 14.5 8.1Q15 6.9 15 5.6Q15 4.3 14.5 3.1Q14 1.9 13.1 1ZM10 5.4Q10 6 9.8 6.4L9.5 6.6L12.9 14.3L12 14.8L11.3 13H5.7L4.9 14.8L4 14.3L7.4 6.6Q7.1 6.3 7 5.9Q6.9 5.4 7.1 5Q7.3 4.6 7.7 4.3Q8 4.1 8.4 4.1Q8.8 4.1 9.1 4.2Q9.5 4.4 9.7 4.7Q10 5 10 5.4ZM8.4 5.1Q8.3 5.1 8.2 5.2Q8.1 5.3 8 5.5Q8 5.6 8.1 5.7Q8.1 5.9 8.2 5.9Q8.4 6 8.5 6Q8.7 6 8.9 5.9Q9 5.8 9 5.6Q9 5.4 8.9 5.3Q8.8 5.2 8.7 5.1Q8.5 5.1 8.4 5.1ZM8.6 7.1H8.4L7.5 9.1H9.5ZM10.8 12.1 9.9 10.1H7L6.2 12.1Z"/></svg><span class="t" style="left:206.5px">0</span><span class="t" style="left:975.4px;display:inline-block;transform:scaleX(0.9695);transform-origin:0 50%;letter-spacing:0;">Ln 34, Col 20</span><span class="t" style="left:1059.4px;display:inline-block;transform:scaleX(0.9245);transform-origin:0 50%;letter-spacing:0;">Spaces: 4</span><span class="t" style="left:1124.2px;display:inline-block;transform:scaleX(0.9600);transform-origin:0 50%;letter-spacing:0;">UTF-8</span><span class="t" style="left:1171.7px;display:inline-block;transform:scaleX(0.8576);transform-origin:0 50%;letter-spacing:0;">CRLF</span><span class="t" style="left:1231.6px;display:inline-block;transform:scaleX(0.9333);transform-origin:0 50%;letter-spacing:0;">PHP</span><span class="t" style="left:1267.6px;display:inline-block;transform:scaleX(0.9895);transform-origin:0 50%;letter-spacing:0;">8.0</span><svg class="ci " width="14" height="14" viewBox="0 0 16 16" style="left:1212.5px;top:3.7px"><path fill="#cccccc" d="M6 3H5.9Q5.6 3 5.3 3.1Q5.1 3.2 4.9 3.4Q4.7 3.6 4.6 3.9Q4.5 4.2 4.5 4.5V5.8Q4.5 6.1 4.4 6.5Q4.4 6.8 4.3 7.1Q4.2 7.4 4 7.6Q3.8 7.8 3.5 8Q3.8 8.2 4 8.4Q4.2 8.6 4.3 8.9Q4.4 9.2 4.4 9.5Q4.5 9.9 4.5 10.2V11.5Q4.5 11.8 4.6 12.1Q4.7 12.4 4.9 12.6Q5.1 12.8 5.3 12.9Q5.6 13 5.9 13H6V14H5.9Q5.4 14 5 13.8Q4.6 13.7 4.2 13.3Q3.9 13 3.7 12.5Q3.6 12.1 3.5 11.7V11.7Q3.5 11.3 3.5 10.8V10Q3.5 9.7 3.4 9.4Q3.3 9.1 3.1 9V8.9Q2.9 8.7 2.7 8.6Q2.4 8.5 2.1 8.5H2V7.5H2.1Q2.4 7.5 2.7 7.4Q2.9 7.3 3.1 7.1Q3.3 6.9 3.4 6.6Q3.5 6.3 3.5 6V5.2Q3.5 4.7 3.5 4.3Q3.6 3.9 3.7 3.5Q3.9 3 4.2 2.7Q4.6 2.3 5 2.2Q5.4 2 5.9 2H6ZM13.9 8.5H14V7.5H13.9Q13.6 7.5 13.3 7.4Q13.1 7.3 12.9 7.1V7Q12.7 6.9 12.6 6.6Q12.5 6.3 12.5 6V5.2Q12.5 4.7 12.5 4.3V4.3Q12.4 3.9 12.3 3.5Q12.1 3 11.8 2.7Q11.4 2.3 11 2.2Q10.6 2 10.1 2H10V3H10.1Q10.4 3 10.7 3.1Q10.9 3.2 11.1 3.4Q11.3 3.6 11.4 3.9Q11.5 4.2 11.5 4.5V5.8Q11.5 6.1 11.6 6.5Q11.6 6.8 11.7 7.1Q11.8 7.4 12 7.6Q12.2 7.8 12.5 8H12.4Q13.2 8.1 13.9 8.5ZM10.3 9.5Q11.1 9 12 9Q13.2 9 14.1 9.9Q15 10.8 15 12Q15 12.9 14.5 13.7Q14 14.4 13.1 14.7Q12.3 15.1 11.4 14.9Q10.5 14.8 9.9 14.1Q9.2 13.5 9.1 12.6Q8.9 11.7 9.3 10.9Q9.6 10 10.3 9.5ZM13.1 10.1 12 11.3 10.9 10.1 10.1 10.9 11.3 12 10.1 13.1 10.9 13.9 12 12.7 13.1 13.9 13.9 13.1 12.7 12 13.9 10.9Z"/></svg><svg class="ci " width="14" height="14" viewBox="0 0 16 16" style="left:1299.7px;top:3.7px"><path fill="#cccccc" d="M11.4 1.1Q12.6 1.3 13.5 2.2Q14.5 3 14.8 4.2Q15.1 5.3 14.9 6.5Q14.6 8.1 13.3 9.1Q12.1 10.1 10.5 10.1Q9.8 10.1 9.2 9.9L8.4 10.8L8 11H7V12.5L6.5 13H5V14.5L4.5 15H1.5L1 14.5V12.2L1.1 11.8L6.1 6.9Q5.9 6.2 5.9 5.4Q5.9 4.5 6.4 3.5Q6.8 2.6 7.6 2Q8.4 1.4 9.4 1.1Q10.3 0.9 11.4 1.1ZM12.7 8.3Q13.7 7.5 13.9 6.3Q14.1 5.4 13.8 4.5Q13.6 3.7 13 3Q12.3 2.4 11.5 2.2Q10.6 1.9 9.7 2.1Q8.5 2.3 7.7 3.3Q6.9 4.3 6.9 5.5Q6.9 6.2 7.1 6.8L7 7.4L2 12.4V14H4V12.5L4.5 12H6V10.5L6.5 10H7.7L8.6 9L9.2 8.9Q9.8 9.1 10.5 9.1Q11.7 9.1 12.7 8.3ZM11.8 5.5Q12 5.3 12 5.1Q12.1 4.8 11.9 4.6Q11.8 4.3 11.6 4.2Q11.4 4 11.1 4Q10.8 3.9 10.5 4.1Q10.3 4.2 10.2 4.4Q10 4.8 10.1 5.2Q10.1 5.6 10.5 5.8Q10.8 6 11.2 5.9Q11.6 5.9 11.8 5.5Z"/></svg><div class="abs" style="left:1322px;top:-1px;width:177px;height:22px;background:#7a6400"></div><svg class="abs" style="left:1330.3px;top:5.2px" width="11" height="11" viewBox="0 0 24 24"><path d="M12 1.500L21.100 6.750V17.250L12 22.500 2.900 17.250V6.750Z" fill="#ffffff"/><path d="M9 7.500L16.500 12 9 16.500Z" fill="#7a6400"/></svg><span class="t" style="left:1346px;color:#ffffff;display:inline-block;transform:scaleX(0.9902);transform-origin:0 50%;letter-spacing:0;">Tabnine: Sign-in is required</span><svg class="ci " width="14" height="14" viewBox="0 0 16 16" style="left:1507.0px;top:3.7px"><path fill="#cccccc" d="M13.4 10.6Q13 9.4 13 8.2V6.2Q13 5.2 12.7 4.3Q12.4 3.5 11.7 2.7Q11.1 2 10.3 1.6Q9.4 1.1 8.5 1Q7.4 0.9 6.4 1.3Q5.4 1.6 4.6 2.3Q3.8 3 3.4 4Q3 5 3 6V8.2Q3 9.4 2.6 10.6L2 12.3L2.5 13H6Q6 13.8 6.6 14.4Q7.1 15 8 15Q8.8 15 9.4 14.4Q10 13.8 10 13H13.5L14 12.3ZM8.7 13.7Q8.4 14 8 14Q7.6 14 7.3 13.7Q7 13.4 7 13H9Q9 13.4 8.7 13.7ZM3.1 12 3.5 10.9Q4 9.6 4 8.2V6Q4 5.2 4.3 4.4Q4.7 3.6 5.3 3Q5.9 2.5 6.7 2.2Q7.6 1.9 8.4 2Q10 2.2 11 3.4Q11.5 4 11.7 4.7Q12 5.4 12 6.2V8.2Q12 9.6 12.4 10.9L12.8 12Z"/></svg></div>
<div id="task"><svg class="abs" style="left:0;top:0" width="1536" height="40" viewBox="0 858.33 1600 41.67"><defs><linearGradient id="gfun" x1="0" y1="0" x2="1" y2="0.3"><stop offset="0" stop-color="#7a4dff"/><stop offset="1" stop-color="#c9bcff" stop-opacity=".5"/></linearGradient><radialGradient id="gff" cx="0.7" cy="0.2" r="0.9"><stop offset="0" stop-color="#ffe14d"/><stop offset=".45" stop-color="#ff9a1f"/><stop offset="1" stop-color="#f0364f"/></radialGradient><linearGradient id="gedge" x1="0" y1="1" x2="1" y2="0"><stop offset="0" stop-color="#0c59a4"/><stop offset=".55" stop-color="#2aa7e0"/><stop offset="1" stop-color="#6fdc3c"/></linearGradient><linearGradient id="gsea" x1="0" y1="0" x2="1" y2=".6"><stop offset="0" stop-color="#5cc6ea"/><stop offset=".5" stop-color="#2f9be6"/><stop offset="1" stop-color="#1a78dc"/></linearGradient><linearGradient id="gcloud" x1="0" y1="0" x2="0" y2="1"><stop offset="0" stop-color="#e6effb"/><stop offset="1" stop-color="#9fc0ee"/></linearGradient><clipPath id="csb"><rect x="1250.6" y="858.5" width="298.6" height="41.500"/></clipPath></defs><rect x="4.600" y="858.33" width=".9" height="42" fill="#929a9f"/><rect x="885.8" y="858.33" width="51.200" height="42" fill="#eaf0f4"/><rect x="683.4" y="897.300" width="42.0" height="2.700" fill="#0a78d4"/><rect x="735" y="897.300" width="42.2" height="2.700" fill="#0a78d4"/><rect x="787" y="897.300" width="42.0" height="2.700" fill="#0a78d4"/><rect x="838.2" y="897.300" width="42.6" height="2.700" fill="#0a78d4"/><rect x="885.8" y="897.300" width="51.2" height="2.700" fill="#0a78d4"/><path d="M704.8 878.5L694.06 872.30A12.4 12.4 0 0 1 715.54 872.30Z" fill="#ea4335"/><path d="M704.8 878.5L715.54 872.30A12.4 12.4 0 0 1 704.80 890.90Z" fill="#fbbc04"/><path d="M704.8 878.5L704.80 890.90A12.4 12.4 0 0 1 694.06 872.30Z" fill="#34a853"/><circle cx="704.8" cy="878.5" r="5.70" fill="#ffffff"/><circle cx="704.8" cy="878.5" r="4.46" fill="#1a73e8"/><circle cx="699.3" cy="885.400" r="7.500" fill="#1b8a6b"/><circle cx="699.3" cy="881.55" r="1.98" fill="#bfe8d8"/><rect x="697.86" y="884.70" width="2.88" height="6.75" rx="1.08" fill="#bfe8d8"/><path d="M757 878.5L746.26 872.30A12.4 12.4 0 0 1 767.74 872.30Z" fill="#ea4335"/><path d="M757 878.5L767.74 872.30A12.4 12.4 0 0 1 757.00 890.90Z" fill="#fbbc04"/><path d="M757 878.5L757.00 890.90A12.4 12.4 0 0 1 746.26 872.30Z" fill="#34a853"/><circle cx="757" cy="878.5" r="5.70" fill="#ffffff"/><circle cx="757" cy="878.5" r="4.46" fill="#1a73e8"/><circle cx="750.8" cy="884.900" r="7.500" fill="#a63fc6"/><circle cx="750.8" cy="881.05" r="1.98" fill="#e6c4f0"/><rect x="749.36" y="884.20" width="2.88" height="6.75" rx="1.08" fill="#e6c4f0"/><circle cx="763.5" cy="885.600" r="5.500" fill="#a63fc6"/><circle cx="763.5" cy="882.45" r="1.54" fill="#e6c4f0"/><rect x="762.38" y="884.90" width="2.24" height="5.25" rx="0.84" fill="#e6c4f0"/><path d="M795.800 867.800L820.500 870.500 811.500 881.500H802Z" fill="url(#gfun)"/><path d="M795.800 867.800L816 870 814.500 873 797.500 871.500Z" fill="#6a3dff"/><circle cx="802.400" cy="884.900" r="8.300" fill="#1fa37a"/><path d="M798.400 885.200l3 3 5.200-5.600" stroke="#fff" stroke-width="1.800" fill="none"/><circle cx="860.200" cy="878.600" r="12.400" fill="#ff6c37"/><path d="M853.500 885.500l7.500-6.500 3.500-4.500 1.800-2.200M861 879l-3.500 5" stroke="#fff" stroke-width="1.700" fill="none" stroke-linecap="round"/><circle cx="866.600" cy="872" r="1.500" fill="#fff"/><g transform="translate(898.600 867) scale(0.252)"><path fill="#1577bd" d="M96.5 10.8 75.9 0.9a6.2 6.2 0 0 0-7.1 1.2L1.3 63.6a4.2 4.2 0 0 0 0 6.2l5.5 5a4.2 4.2 0 0 0 5.3 0.2L93.3 13.4c2.7-2.1 6.7-0.100 6.7 3.300v-0.2a6.300 6.300 0 0 0-3.500-5.700z"/><path fill="#1f8fdc" d="M96.5 89.2 75.900 99.100a6.200 6.200 0 0 1-7.100-1.200L1.300 36.400a4.200 4.200 0 0 1 0-6.200l5.500-5a4.200 4.200 0 0 1 5.300-0.200L93.300 86.600c2.700 2.100 6.700 0.100 6.700-3.300v0.200a6.300 6.300 0 0 1-3.500 5.700z"/><path fill="#2ea3f2" d="M75.900 99.100a6.200 6.200 0 0 1-7.100-1.200c2.300 2.300 6.200 0.700 6.200-2.600V4.700c0-3.300-3.900-4.900-6.200-2.600a6.200 6.200 0 0 1 7.100-1.200l20.600 9.900A6.300 6.300 0 0 1 100 16.500v67a6.300 6.300 0 0 1-3.500 5.700z"/></g><circle cx="963.200" cy="878.700" r="11.300" fill="#0d0d0d" stroke="#e0262c" stroke-width="1.300"/><circle cx="961.500" cy="879.500" r="4.200" fill="none" stroke="#e0262c" stroke-width="2.800" stroke-dasharray="2.200 1.100"/><path d="M962 882l5-6.500M967.500 872.500l.8 4.800-4.800-.8z" stroke="#e0262c" stroke-width="1.600" fill="#e0262c"/><path d="M1009 868.2L1015.2 872.2L1009 876.2L1002.8 872.2ZM1021.3 868.2L1027.5 872.2L1021.3 876.2L1015.0999999999999 872.2ZM1009 876.2L1015.2 880.2L1009 884.2L1002.8 880.2ZM1021.3 876.2L1027.5 880.2L1021.3 884.2L1015.0999999999999 880.2ZM1015.15 882.6L1021.35 886.2L1015.15 889.8000000000001L1008.9499999999999 886.2Z" fill="#000"/><circle cx="1066.600" cy="879.300" r="11.800" fill="url(#gff)"/><path d="M1070 866.500c3.500 1 7.500 5 8.300 10.500l-5-3.500z" fill="#ffd23a"/><circle cx="1067.800" cy="877.800" r="5.600" fill="#7a3ee6"/><path d="M1060 874c2-.8 4.500 0 5.500 2 .8 1.600 2.500 1.500 3.500 3-1 2.500-4.500 3.500-7 2-2.200-1.400-3-4.500-2-7z" fill="#ff7a2a" opacity=".9"/><path d="M1106 876L1118.500 867.500 1131 876V891H1106Z" fill="#0f5dab"/><path d="M1106 876H1131V891H1106Z" fill="#35b3f1"/><path d="M1108.800 876.300H1128.200L1118.500 883.500Z" fill="#fff"/><path d="M1106 891L1118.500 881.500 1131 891Z" fill="#1f8fdc"/><path d="M1106 876L1118.500 885.500 1106 891Z" fill="#2aa2ea"/><path d="M1158 871.500a1.500 1.500 0 0 1 1.500-1.500h7l2 2h12a1.500 1.500 0 0 1 1.500 1.500v14.500h-24z" fill="#f7b928"/><rect x="1158" y="873.500" width="24" height="14.500" rx="1" fill="#ffd968"/><path d="M1162.500 888v-7.500h15v7.500h-3.500v-4.500h-8v4.500z" fill="#3a8fd9"/><circle cx="1221.600" cy="878.800" r="12.400" fill="url(#gedge)"/><path d="M1210 881c0-5 4.500-8.800 10.500-8.800 6.500 0 11.500 3.500 12.800 8.300h-11.500c-1.500 0-2.600 1.200-2.600 3 0 2.800 2.600 5 6.600 5 2.200 0 4.300-.6 6-1.800-2 3.200-5.800 5-10 5-6.500-.2-11.800-4.700-11.800-10.700z" fill="#ffffff" opacity=".22"/><path d="M1215.500 884.500c0-3.600 3-6 6.600-6 2.400 0 4.400 1 5.500 2.600h-5.800c-1.500 0-2.600 1.200-2.600 3 0 2.800 2.600 5 6.600 5 2.200 0 4.300-.6 6-1.800-2 3.200-5.800 4.500-9.500 4-3.900-.5-6.800-3.300-6.800-6.800z" fill="#0b4f98"/><rect x="1250.600" y="858.500" width="298.600" height="41.500" fill="#ffffff"/><g clip-path="url(#csb)"><ellipse cx="1292" cy="905" rx="42" ry="28.500" fill="url(#gsea)"/><ellipse cx="1278" cy="893" rx="20" ry="10" fill="#7fd9ea" opacity=".45"/><path d="M1266.900 880.400Q1270 879.800 1272.500 878.600Q1279 883 1286 880.400Q1294 876.200 1301.250 870.800L1307.500 868.100Q1308.200 866.800 1305 866.200Q1303 862.500 1296.250 861.800Q1291 862.200 1288 864.500L1283 865.700Q1285.500 867.500 1285.800 869.800Q1281 874 1274.400 876.300Q1271.800 875.800 1269.500 873.600Q1270.300 877 1268.500 878.800Z" fill="#a9b3b8"/><path d="M1274 879.500Q1280 882.500 1286 880.400Q1294 876.200 1301.250 870.800L1306.500 868.500Q1298 870 1291 875Q1283 880 1274 879.500Z" fill="#7d888e" opacity=".6"/><circle cx="1299.400" cy="866.400" r=".9" fill="#222"/><circle cx="1262.500" cy="878" r="3.800" fill="#56b8e6"/><circle cx="1259" cy="880" r="2.600" fill="#56b8e6"/><circle cx="1266" cy="875.500" r="2.400" fill="#6cc4ec"/><circle cx="1256" cy="873.600" r="1.700" fill="#7ccbf0"/><circle cx="1264.400" cy="868.600" r="1.500" fill="#8bd2f2"/><circle cx="1258.200" cy="871" r="1.100" fill="#8bd2f2"/><ellipse cx="1310" cy="887.500" rx="4.300" ry="5" fill="#f39a78" transform="rotate(20 1310 887.500)"/><circle cx="1307.300" cy="887.800" r=".7" fill="#7a2a1a"/><circle cx="1310.600" cy="890" r=".7" fill="#7a2a1a"/><path d="M1306 891c-4 1-7.500 4-9 9M1307.500 892.500c-2 2.500-3 5-3 8M1310 893c0 2.500.5 5 2 7.500M1312.500 891.500c2.500 2 4 5 4.500 8.500M1305.500 888.500c-3.500 0-6-2-7.500-5M1314 887.500c2 0 4-1 5.500-3" stroke="#ee8f78" stroke-width="1.700" fill="none" stroke-linecap="round"/></g><circle cx="1531.300" cy="876.600" r="5.500" fill="none" stroke="#333" stroke-width="1.400"/><path d="M1527.400 881.200L1521 887.400" stroke="#333" stroke-width="1.400"/><path d="M1566.800 873.200L1573.700 872.200V878.700H1566.800ZM1574.600 872.100L1583.300 870.900V878.700H1574.600ZM1566.800 879.600H1573.700V886.100L1566.800 885.100ZM1574.600 879.600H1583.300V887.400L1574.600 886.200Z" fill="#000"/><path d="M26.100 870.900H42.600V884.900H40.500V888.300L37 884.900H26.100Z" fill="#000"/><path d="M29 874.300H39.800M29 877.600H39.800M29 880.900H36" stroke="#9aa3a8" stroke-width="1.100"/><circle cx="26.100" cy="887.600" r="8" fill="#cfd9df" fill-opacity=".85" stroke="#70787d" stroke-width=".9"/><path d="M166.500 873H179.600V883.200H166.500ZM173 883.200V885.300M169.800 885.400H176.400" stroke="#111" stroke-width="1.100" fill="none"/><path d="M164.800 872.700V885.500M163.300 872.700H166.300M163.300 872.700l1.500 2.300 1.500-2.300" stroke="#111" stroke-width=".9" fill="none"/><path d="M188.700 876.500H191.500L195.300 872.800V885.400L191.500 881.700H188.700Z" stroke="#111" stroke-width="1.100" fill="none"/><path d="M197.600 876.800a3.200 3.200 0 0 1 0 4.600M200 874.600a6.300 6.300 0 0 1 0 9M202.500 872.600a9.300 9.300 0 0 1 0 13" stroke="#111" stroke-width="1" fill="none"/><rect x="215.800" y="875.300" width="13" height="8.400" fill="none" stroke="#111" stroke-width="1.100"/><rect x="229" y="877.600" width="1.300" height="3.800" fill="#111"/><rect x="217" y="876.600" width="7.300" height="5.800" fill="#111"/><path d="M213 874.500h3v2.500h-3zM213.800 873v1.500M215.200 873v1.500M214.500 877v2.500" stroke="#111" stroke-width=".9" fill="#111"/><path d="M240.300 882.600L246.800 876 253.300 882.600" stroke="#111" stroke-width="1.300" fill="none"/><circle cx="298" cy="875.200" r="6" fill="#f6921e"/><circle cx="296.500" cy="873.500" r="3.200" fill="#ffbe3d" opacity=".75"/><path d="M284.500 890.500a4.800 4.800 0 0 1-.3-9.500 7 7 0 0 1 12.800-2.500 5.800 5.800 0 0 1 8 5.500 3.300 3.300 0 0 1-3 6.500z" fill="url(#gcloud)"/></svg><span class="t ar" style="left:59.5px;width:50.9px;top:4.9px;font-size:10.800px;line-height:14px;text-align:center">١١:٢٣ ص</span><span class="t ar" style="left:55.7px;width:57.6px;top:21.4px;font-size:10.800px;line-height:14px;text-align:center">٢٠٢٤/٠٦/٠٨</span><span class="t ar" style="left:19.1px;width:12px;top:21.3px;font-size:11px;font-weight:700;line-height:12px;text-align:center;color:#000">٥</span><span class="t" style="left:124.1px;top:14.2px;font-size:11.300px;line-height:14px;color:#000;letter-spacing:-0.5px">ENG</span><span class="t" style="left:302.3px;top:13.4px;font-size:13.800px;line-height:16px;color:#000;letter-spacing:-0.4px">14°C</span><span class="t ar" style="left:338.9px;width:54.7px;top:13.2px;font-size:13px;line-height:16px;color:#000;text-align:center">غائم غالبًا</span><span class="t ar" style="left:1352.6px;width:97.0px;top:9.8px;font-size:14.500px;line-height:18px;color:#2b2b2b;text-align:center">اكتب هنا للبحث</span></div>
<div class="abs" style="left:0;top:35px;width:1536px;height:1px;background:#2b2b2b"></div><div class="abs" style="left:409.5px;top:35px;width:121.1px;height:1px;background:#0078d4"></div>
</div>
</body></html>
